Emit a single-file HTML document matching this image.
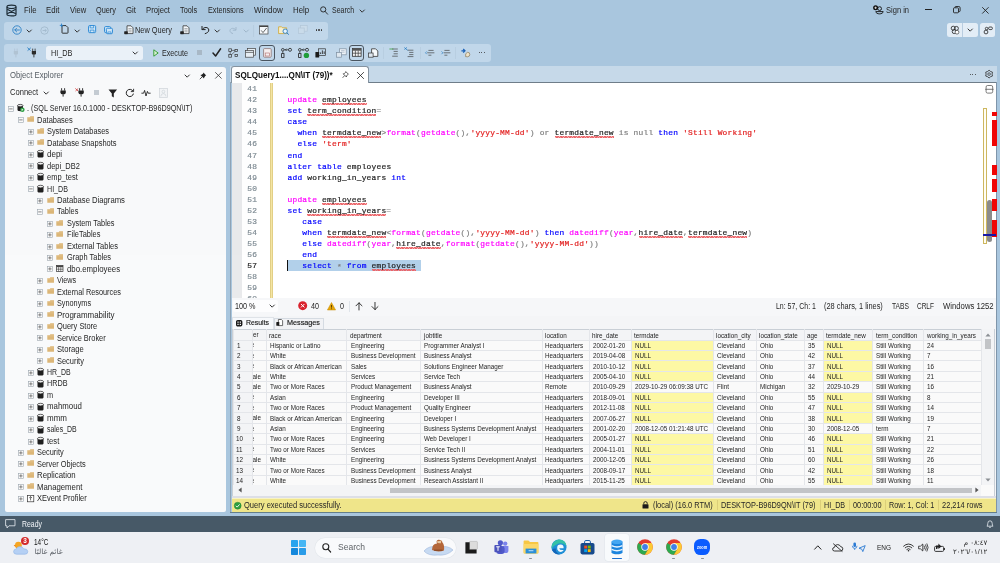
<!DOCTYPE html>
<html lang="en"><head><meta charset="utf-8"><title>SQLQuery1.sql - HI_DB - SQL Server Management Studio</title>
<style>
*{box-sizing:border-box;margin:0;padding:0}
html,body{width:1000px;height:563px;overflow:hidden}
body{position:relative;background:#a9c6de;font-family:"Liberation Sans",sans-serif;font-size:8.4px;color:#262626}
.a{position:absolute;white-space:nowrap}
.t{position:absolute;white-space:nowrap;line-height:12px;height:12px;transform-origin:0 50%}
.m{font-family:"Liberation Mono",monospace;font-size:7.9px;letter-spacing:0.207px;-webkit-text-stroke:0.2px}
.ln,.cl{position:absolute;white-space:pre;line-height:11px;height:11px}
.q{background-image:linear-gradient(45deg,transparent 34%,#ec6468 34%,#ec6468 66%,transparent 66%),linear-gradient(-45deg,transparent 34%,#ec6468 34%,#ec6468 66%,transparent 66%);background-size:2.6px 1.7px;background-position:0 9.1px,1.3px 9.1px;background-repeat:repeat-x}
.cl span{display:inline-block;height:11px;vertical-align:top}
.g{position:absolute;white-space:nowrap;font-size:6.6px;line-height:8.6px;height:8.6px;transform:scaleX(0.955);transform-origin:0 50%;color:#1e1e1e}
svg{position:absolute;overflow:visible}
#root{position:absolute;left:0;top:0;width:1000px;height:563px;will-change:transform;opacity:0.9999}
</style></head>
<body><div id="root">
<!-- menu bar -->
<svg style="left:6.00px;top:4.00px" width="11" height="13" viewBox="0 0 11 13"><path d="M1 2.6 C1 0.6 10 0.6 10 2.6 V10.4 C10 12.4 1 12.4 1 10.4 Z" fill="none" stroke="#1c2b36" stroke-width="1.2"/><path d="M1 3 C2 5 9 5 10 3 M1.2 9.8 L9.8 5.2 M1.2 5.2 L9.8 9.8" fill="none" stroke="#1c2b36" stroke-width="1.1"/></svg>
<div class="t" style="left:23.50px;top:4.11px;transform:scaleX(0.9235);">File</div>
<div class="t" style="left:46.00px;top:4.11px;transform:scaleX(0.9327);">Edit</div>
<div class="t" style="left:69.50px;top:4.11px;transform:scaleX(0.9063);">View</div>
<div class="t" style="left:96.00px;top:4.11px;transform:scaleX(0.8743);">Query</div>
<div class="t" style="left:125.80px;top:4.11px;transform:scaleX(0.9316);">Git</div>
<div class="t" style="left:146.00px;top:4.11px;transform:scaleX(0.9180);">Project</div>
<div class="t" style="left:180.00px;top:4.11px;transform:scaleX(0.8763);">Tools</div>
<div class="t" style="left:208.00px;top:4.11px;transform:scaleX(0.8688);">Extensions</div>
<div class="t" style="left:253.70px;top:4.11px;transform:scaleX(0.9640);">Window</div>
<div class="t" style="left:292.50px;top:4.11px;transform:scaleX(0.9377);">Help</div>
<svg style="left:320.00px;top:6.00px" width="8" height="9" viewBox="0 0 8 9"><circle cx="3.2" cy="3.4" r="2.6" fill="none" stroke="#222" stroke-width="0.9"/><path d="M5.1 5.4 L7.6 8.2" stroke="#222" stroke-width="0.9" stroke-linecap="round"/></svg>
<div class="t" style="left:332.00px;top:4.11px;transform:scaleX(0.8341);">Search</div>
<svg style="left:359.30px;top:9.00px" width="6.4" height="4.4" viewBox="0 0 6.4 4.4"><path d="M1 0.99 L3.20 3.19 L5.40 0.99" fill="none" stroke="#333" stroke-width="1.0" stroke-linecap="round" stroke-linejoin="round"/></svg>
<svg style="left:873.00px;top:4.60px" width="11" height="10" viewBox="0 0 11 10"><circle cx="2.6" cy="2.8" r="2.5" fill="#111"/><path d="M1.4 2.8H3.8M2.6 1.6V4" stroke="#fff" stroke-width="0.7"/><circle cx="6.6" cy="3.6" r="1.9" fill="none" stroke="#111" stroke-width="0.9"/><path d="M2.8 6.6 C3 9.6 10 9.6 10.2 6.6 Z" fill="none" stroke="#111" stroke-width="0.9"/></svg>
<div class="t" style="left:885.60px;top:4.11px;transform:scaleX(0.8994);">Sign in</div>
<div class="a" style="left:924.70px;top:9.20px;width:7.00px;height:0.90px;background:#222;"></div>
<svg style="left:953.00px;top:6.00px" width="8" height="8" viewBox="0 0 8 8"><rect x="0.5" y="1.8" width="5" height="5" rx="0.8" fill="none" stroke="#222" stroke-width="0.9"/><path d="M2 1.8 V1.3 Q2 0.5 2.8 0.5 H5.8 Q7.1 0.5 7.1 1.8 V4.8 Q7.1 5.6 6.3 5.6 H5.6" fill="none" stroke="#222" stroke-width="0.9"/></svg>
<svg style="left:982.00px;top:6.80px" width="7" height="7" viewBox="0 0 7 7"><path d="M0.5 0.5 L6.3 6.3 M6.3 0.5 L0.5 6.3" stroke="#222" stroke-width="0.9" stroke-linecap="round"/></svg>
<div class="a" style="left:947.00px;top:23.00px;width:31.00px;height:14.00px;background:#e3edf6;border-radius:2.5px;"></div>
<div class="a" style="left:962.20px;top:23.00px;width:0.80px;height:14.00px;background:#b9cde0;"></div>
<div class="a" style="left:980.00px;top:23.00px;width:14.80px;height:14.00px;background:#e3edf6;border-radius:2.5px;"></div>
<svg style="left:949.50px;top:25.00px" width="10" height="10" viewBox="0 0 10 10"><circle cx="3.2" cy="3.2" r="2" fill="none" stroke="#222" stroke-width="0.8"/><circle cx="6.4" cy="3.4" r="2" fill="none" stroke="#222" stroke-width="0.8"/><circle cx="4.2" cy="6.6" r="2" fill="none" stroke="#222" stroke-width="0.8"/><circle cx="7" cy="7.2" r="1.9" fill="#fff" stroke="#222" stroke-width="0.6"/></svg>
<svg style="left:967.10px;top:28.40px" width="6.4" height="4.4" viewBox="0 0 6.4 4.4"><path d="M1 0.99 L3.20 3.19 L5.40 0.99" fill="none" stroke="#333" stroke-width="1.0" stroke-linecap="round" stroke-linejoin="round"/></svg>
<svg style="left:982.50px;top:25.50px" width="10" height="9" viewBox="0 0 10 9"><circle cx="3" cy="6" r="1.9" fill="none" stroke="#222" stroke-width="0.8"/><circle cx="3.6" cy="2.6" r="1.3" fill="none" stroke="#222" stroke-width="0.8"/><rect x="5.6" y="1" width="3.8" height="2.6" rx="1.2" fill="none" stroke="#222" stroke-width="0.8"/></svg>
<!-- toolbar 1 -->
<div class="a" style="left:4.00px;top:21.50px;width:324.00px;height:18.00px;background:#c1d7ea;border-radius:3px;"></div>
<svg style="left:11.50px;top:25.00px" width="10" height="10" viewBox="0 0 10 10"><circle cx="5" cy="5" r="4.2" fill="none" stroke="#2b7fc4" stroke-width="0.9"/><path d="M7.4 5H2.8M4.6 3.2L2.8 5L4.6 6.8" fill="none" stroke="#2b7fc4" stroke-width="0.9" stroke-linecap="round" stroke-linejoin="round"/></svg>
<svg style="left:26.30px;top:28.80px" width="6.4" height="4.4" viewBox="0 0 6.4 4.4"><path d="M1 0.99 L3.20 3.19 L5.40 0.99" fill="none" stroke="#333" stroke-width="1.0" stroke-linecap="round" stroke-linejoin="round"/></svg>
<svg style="left:39.80px;top:25.70px" width="9" height="9" viewBox="0 0 9 9"><circle cx="4.5" cy="4.5" r="3.7" fill="none" stroke="#9fb6c9" stroke-width="0.8"/><path d="M2.6 4.5H6.2M4.9 3.1L6.3 4.5L4.9 5.9" fill="none" stroke="#9fb6c9" stroke-width="0.8"/></svg>
<svg style="left:58.50px;top:23.30px" width="10" height="11" viewBox="0 0 10 11"><path d="M3 2.6 H7 L9 4.6 V9.6 Q9 10.2 8.4 10.2 H3.6 Q3 10.2 3 9.6 Z" fill="none" stroke="#222" stroke-width="0.9"/><path d="M0.8 2.4 H4.2 M2.5 0.6 V4.2" stroke="#2b7fc4" stroke-width="0.9"/></svg>
<svg style="left:74.30px;top:28.80px" width="6.4" height="4.4" viewBox="0 0 6.4 4.4"><path d="M1 0.99 L3.20 3.19 L5.40 0.99" fill="none" stroke="#333" stroke-width="1.0" stroke-linecap="round" stroke-linejoin="round"/></svg>
<svg style="left:88.00px;top:25.40px" width="8.2" height="8.2" viewBox="0 0 9 9"><rect x="0.6" y="0.6" width="7.8" height="7.8" rx="1.2" fill="#cfe6f8" stroke="#2384d3" stroke-width="1"/><path d="M2.4 0.8V3.2H6.2V0.8M2.4 8.2V5.6H6.6V8.2" fill="none" stroke="#2384d3" stroke-width="0.8"/></svg>
<svg style="left:104.40px;top:25.50px" width="9.2" height="8.3" viewBox="0 0 10 9"><rect x="0.6" y="0.6" width="6.6" height="6.6" rx="1.2" fill="#cfe6f8" stroke="#2384d3" stroke-width="1"/><rect x="2.6" y="2.4" width="6.6" height="6" rx="1.2" fill="#cfe6f8" stroke="#2384d3" stroke-width="1"/><path d="M4.2 8.2V6.4H7.6V8.2" fill="none" stroke="#2384d3" stroke-width="0.7"/></svg>
<svg style="left:123.60px;top:25.40px" width="10" height="10" viewBox="0 0 10 10"><path d="M3 0.8 H7 L9 2.8 V8.6 H3 Z" fill="#f4f8fb" stroke="#333" stroke-width="0.8"/><path d="M4.4 3.6H7.6M4.4 5.2H7.6M4.4 6.8H7.6" stroke="#777" stroke-width="0.6"/><rect x="0.2" y="6.2" width="3.6" height="3" rx="0.6" fill="#222"/></svg>
<div class="t" style="left:135.00px;top:24.11px;transform:scaleX(0.8807);">New Query</div>
<svg style="left:180.00px;top:25.40px" width="10" height="10" viewBox="0 0 10 10"><path d="M3 0.8 H7 L9 2.8 V8.6 H3 Z" fill="#f4f8fb" stroke="#333" stroke-width="0.8"/><path d="M4.4 3.6H7.6M4.4 5.2H7.6M4.4 6.8H7.6" stroke="#777" stroke-width="0.6"/><rect x="0.2" y="6.2" width="3.6" height="3" rx="0.6" fill="#222"/></svg>
<svg style="left:200.50px;top:25.00px" width="9" height="9" viewBox="0 0 9 9"><path d="M1 1 V4.6 H4.6" fill="none" stroke="#222" stroke-width="1"/><path d="M1.2 4.4 C3 1.6 7.6 1.8 7.8 5 C7.9 7 6 8 4.2 8.6" fill="none" stroke="#222" stroke-width="1" stroke-linecap="round"/></svg>
<svg style="left:214.30px;top:28.80px" width="6.4" height="4.4" viewBox="0 0 6.4 4.4"><path d="M1 0.99 L3.20 3.19 L5.40 0.99" fill="none" stroke="#333" stroke-width="1.0" stroke-linecap="round" stroke-linejoin="round"/></svg>
<svg style="left:229.00px;top:25.50px" width="8" height="8" viewBox="0 0 8 8"><path d="M7 1 V4.2 H3.8" fill="none" stroke="#9fb6c9" stroke-width="0.9"/><path d="M6.8 4 C5.2 1.6 1.2 1.8 1 4.6 C1 6.4 2.6 7.2 4 7.6" fill="none" stroke="#9fb6c9" stroke-width="0.9"/></svg>
<svg style="left:243.30px;top:28.80px" width="6.4" height="4.4" viewBox="0 0 6.4 4.4"><path d="M1 0.99 L3.20 3.19 L5.40 0.99" fill="none" stroke="#9fb6c9" stroke-width="1.0" stroke-linecap="round" stroke-linejoin="round"/></svg>
<div class="a" style="left:253.20px;top:24.50px;width:0.70px;height:12.00px;background:#b8cee1;"></div>
<svg style="left:259.00px;top:24.90px" width="10" height="10" viewBox="0 0 10 10"><rect x="0.6" y="0.8" width="8.4" height="8.2" fill="#f6f9fc" stroke="#444" stroke-width="0.7"/><path d="M0.6 1.4H9" stroke="#333" stroke-width="1"/><path d="M2.2 5.4L4 7.6L7.6 3" fill="none" stroke="#444" stroke-width="0.8"/></svg>
<svg style="left:277.50px;top:24.70px" width="12" height="10" viewBox="0 0 12 10"><path d="M0.6 1.8 H3.6 L4.6 2.8 H8.6 V8.6 H0.6 Z" fill="#f6efcf" stroke="#d0a62e" stroke-width="0.8"/><circle cx="7.2" cy="6.2" r="2.2" fill="#e9f4fd" stroke="#2b7fc4" stroke-width="0.9"/><path d="M8.8 7.8L10.8 9.6" stroke="#2b7fc4" stroke-width="1"/></svg>
<svg style="left:297.50px;top:25.10px" width="10" height="9" viewBox="0 0 10 9"><rect x="2.6" y="0.6" width="6.6" height="5.6" fill="#cbdcea" stroke="#b3c6d7" stroke-width="0.7"/><rect x="0.6" y="3" width="5.6" height="5.4" fill="#c9dbea" stroke="#b3c6d7" stroke-width="0.7"/></svg>
<div class="a" style="left:315.80px;top:29.40px;width:1.30px;height:1.30px;background:#333;border-radius:1px;"></div>
<div class="a" style="left:318.40px;top:29.40px;width:1.30px;height:1.30px;background:#333;border-radius:1px;"></div>
<div class="a" style="left:321.00px;top:29.40px;width:1.30px;height:1.30px;background:#333;border-radius:1px;"></div>
<!-- toolbar 2 -->
<div class="a" style="left:4.00px;top:43.50px;width:486.50px;height:18.30px;background:#c1d7ea;border-radius:3px;"></div>
<svg style="left:13.20px;top:47.80px" width="6" height="10" viewBox="0 0 6 10"><path d="M1.7 0.6V3M4.1 0.6V3" stroke="#b1c3d3" stroke-width="0.8"/><path d="M0.8 3H5V5.2Q5 6.8 2.9 6.8Q0.8 6.8 0.8 5.2Z" fill="#b1c3d3"/><path d="M2.9 6.8V9.4" stroke="#b1c3d3" stroke-width="0.9"/></svg>
<svg style="left:31.40px;top:48.00px" width="6" height="10" viewBox="0 0 6 10"><path d="M1.7 0.6V3M4.1 0.6V3" stroke="#2a2a2a" stroke-width="0.8"/><path d="M0.8 3H5V5.2Q5 6.8 2.9 6.8Q0.8 6.8 0.8 5.2Z" fill="#2a2a2a"/><path d="M2.9 6.8V9.4" stroke="#2a2a2a" stroke-width="0.9"/></svg>
<svg style="left:27.40px;top:47.00px" width="5" height="5" viewBox="0 0 5 5"><path d="M0.4 0.6L3.6 3.6M3.8 0.8L0.6 3.6" stroke="#2b7fc4" stroke-width="0.9"/></svg>
<div class="a" style="left:45.50px;top:45.50px;width:97.50px;height:14.50px;background:#ebf2f9;border-radius:2.5px;"></div>
<div class="t" style="left:51.00px;top:46.51px;transform:scaleX(0.8690);">HI_DB</div>
<svg style="left:132.10px;top:51.20px" width="6.4" height="4.4" viewBox="0 0 6.4 4.4"><path d="M1 0.99 L3.20 3.19 L5.40 0.99" fill="none" stroke="#333" stroke-width="1.0" stroke-linecap="round" stroke-linejoin="round"/></svg>
<svg style="left:152.50px;top:48.80px" width="6" height="8" viewBox="0 0 6 8"><path d="M0.8 0.8L5.2 4L0.8 7.2Z" fill="#d9f0d2" stroke="#2d9a2d" stroke-width="0.9" stroke-linejoin="round"/></svg>
<div class="t" style="left:162.00px;top:46.51px;transform:scaleX(0.8566);">Execute</div>
<div class="a" style="left:197.30px;top:50.20px;width:5.20px;height:5.20px;background:#a8b8c6;"></div>
<svg style="left:211.50px;top:48.20px" width="10" height="9" viewBox="0 0 10 9"><path d="M1 5L3.6 8L8.6 0.8" fill="none" stroke="#222" stroke-width="1.5" stroke-linecap="round" stroke-linejoin="round"/></svg>
<svg style="left:228.00px;top:47.80px" width="11" height="10" viewBox="0 0 11 10"><rect x="0.8" y="0.8" width="2.6" height="2.6" fill="none" stroke="#333" stroke-width="0.7"/><rect x="0.8" y="6.6" width="2.6" height="2.6" fill="none" stroke="#333" stroke-width="0.7"/><rect x="7" y="1.4" width="2.6" height="2.2" fill="none" stroke="#333" stroke-width="0.7"/><rect x="7" y="6.4" width="2.6" height="2.2" fill="none" stroke="#333" stroke-width="0.7"/><path d="M3.4 2.4H7M2.2 3.4V6.6M3.6 6.6L7 3.4" stroke="#333" stroke-width="0.6" fill="none"/></svg>
<svg style="left:244.50px;top:48.00px" width="11" height="10" viewBox="0 0 11 10"><rect x="2.4" y="0.6" width="8" height="6.6" fill="#e8eff5" stroke="#444" stroke-width="0.7"/><rect x="0.6" y="2.6" width="8" height="6.6" fill="#e8eff5" stroke="#444" stroke-width="0.7"/><path d="M0.6 4.4H8.6" stroke="#444" stroke-width="0.7"/></svg>
<div class="a" style="left:258.80px;top:45.00px;width:16.20px;height:16.00px;border:0.9px solid #4a5560;border-radius:3px;"></div>
<svg style="left:262.60px;top:48.00px" width="9" height="10" viewBox="0 0 9 10"><rect x="0.6" y="0.6" width="7.6" height="8.6" rx="0.8" fill="#f6efef" stroke="#8a7272" stroke-width="0.8"/><rect x="2.2" y="5" width="4.4" height="3" fill="none" stroke="#b06a6a" stroke-width="0.6"/></svg>
<svg style="left:280.60px;top:47.80px" width="12" height="10" viewBox="0 0 12 10"><circle cx="1.8" cy="1.8" r="1.3" fill="none" stroke="#222" stroke-width="0.8"/><circle cx="9" cy="1.8" r="1.5" fill="none" stroke="#222" stroke-width="0.8"/><path d="M3.2 1.8H7.4M5.6 0.6L4.4 1.8L5.6 3M1.8 3.2V5.4" stroke="#222" stroke-width="0.7" fill="none"/><rect x="0.6" y="5.6" width="2.4" height="3.8" fill="none" stroke="#222" stroke-width="0.8"/></svg>
<svg style="left:297.60px;top:47.80px" width="12" height="10" viewBox="0 0 12 10"><circle cx="1.8" cy="1.8" r="1.3" fill="none" stroke="#222" stroke-width="0.8"/><circle cx="9" cy="1.8" r="1.5" fill="none" stroke="#222" stroke-width="0.8"/><path d="M3.2 1.8H7.4M5.6 0.6L4.4 1.8L5.6 3M1.8 3.2V5.4" stroke="#222" stroke-width="0.7" fill="none"/><rect x="0.6" y="5.6" width="2.4" height="3.8" fill="none" stroke="#222" stroke-width="0.8"/><circle cx="8.4" cy="7.4" r="2.7" fill="#1f9d3a"/></svg>
<svg style="left:314.60px;top:48.00px" width="11" height="10" viewBox="0 0 11 10"><rect x="3.4" y="0.8" width="7" height="6.6" fill="none" stroke="#333" stroke-width="0.7"/><path d="M5.6 6V4.4M7.4 6V2.4M9.2 6V3.4" stroke="#333" stroke-width="0.9"/><rect x="0.4" y="4" width="3.8" height="5.6" rx="0.6" fill="#1b1b1b"/></svg>
<svg style="left:335.50px;top:48.00px" width="11" height="10" viewBox="0 0 11 10"><rect x="3.6" y="0.8" width="6.6" height="6" fill="#eef3f8" stroke="#7e8fa0" stroke-width="0.7"/><rect x="0.6" y="4.4" width="5" height="4.8" fill="#dfe8f0" stroke="#7e8fa0" stroke-width="0.7"/><path d="M5 2.6H8.6M5 4.2H8.6" stroke="#9aaaba" stroke-width="0.6"/></svg>
<div class="a" style="left:348.50px;top:45.00px;width:15.50px;height:15.60px;border:0.9px solid #4a5560;border-radius:3px;"></div>
<svg style="left:351.60px;top:48.20px" width="10" height="9" viewBox="0 0 10 9"><rect x="0.5" y="0.5" width="8.6" height="7.8" fill="#f3f3f3" stroke="#333" stroke-width="0.8"/><rect x="0.5" y="0.5" width="8.6" height="2.2" fill="#555"/><path d="M0.5 5.2H9.1M3.4 2.6V8.3M6.2 2.6V8.3" stroke="#333" stroke-width="0.7"/></svg>
<svg style="left:368.00px;top:47.80px" width="11" height="10" viewBox="0 0 11 10"><path d="M3.6 0.8H7.6L9.8 3V8.4H3.6Z" fill="#f7fafc" stroke="#333" stroke-width="0.8"/><rect x="0.5" y="5" width="4.6" height="4.2" fill="#dfe8f0" stroke="#333" stroke-width="0.7"/></svg>
<div class="a" style="left:383.40px;top:46.50px;width:0.70px;height:12.00px;background:#b8cee1;"></div>
<svg style="left:388.60px;top:48.00px" width="10" height="9" viewBox="0 0 10 9"><path d="M3.2 1H8.8M4.6 3.4H8.8M4.6 5.8H8.8M3.2 8.2H8.8" stroke="#3a3a3a" stroke-width="0.65"/><path d="M0.4 1H4.4" stroke="#2d9a2d" stroke-width="0.7"/></svg>
<svg style="left:404.00px;top:47.20px" width="10" height="10" viewBox="0 0 10 10"><path d="M3.6 3.2H9.4M5.2 5.4H9.4M5.2 7.6H9.4M3.6 9.6H9.4" stroke="#3a3a3a" stroke-width="0.65"/><path d="M0.4 0.6L3.6 3.2M2.6 0.4L0.6 2.6" stroke="#2b7fc4" stroke-width="0.9"/></svg>
<div class="a" style="left:419.60px;top:46.50px;width:0.70px;height:12.00px;background:#b8cee1;"></div>
<svg style="left:424.60px;top:49.00px" width="10" height="8" viewBox="0 0 10 8"><path d="M3.4 1.4H8.6M2.2 3.8H9.4M3.4 6.2H6.4" stroke="#3a3a3a" stroke-width="0.65"/><path d="M1.8 2.4L0.5 3.8L1.8 5.2" stroke="#2b7fc4" stroke-width="0.7" fill="none"/></svg>
<svg style="left:440.60px;top:49.00px" width="10" height="8" viewBox="0 0 10 8"><path d="M3.4 1.4H8.6M2.6 3.8H9.4M3.4 6.2H6.4" stroke="#3a3a3a" stroke-width="0.65"/><path d="M0.5 2.4L1.8 3.8L0.5 5.2" stroke="#2b7fc4" stroke-width="0.7" fill="none"/></svg>
<div class="a" style="left:455.40px;top:46.50px;width:0.70px;height:12.00px;background:#b8cee1;"></div>
<svg style="left:460.60px;top:47.80px" width="10" height="10" viewBox="0 0 10 10"><path d="M0.4 2.8H3.4M2.2 1L4 2.8L2.2 4.6" stroke="#1b62b8" stroke-width="1.2" fill="none"/><path d="M4.6 8.6Q4 5 6.4 4.4Q8.8 4 8.8 6.4Q8.8 8.6 6.6 8.8Z" fill="#efe3c8" stroke="#8c7a58" stroke-width="0.7"/></svg>
<div class="a" style="left:478.60px;top:52.10px;width:1.30px;height:1.30px;background:#333;border-radius:1px;"></div>
<div class="a" style="left:481.20px;top:52.10px;width:1.30px;height:1.30px;background:#333;border-radius:1px;"></div>
<div class="a" style="left:483.80px;top:52.10px;width:1.30px;height:1.30px;background:#333;border-radius:1px;"></div>
<!-- object explorer -->
<div class="a" style="left:5.00px;top:67.00px;width:220.70px;height:444.60px;background:#f9fafb;border-radius:3px 3px 2px 2px;"></div>
<div class="t" style="left:9.70px;top:68.81px;color:#555c63;transform:scaleX(0.9242);">Object Explorer</div>
<svg style="left:184.40px;top:73.60px" width="6.4" height="4.4" viewBox="0 0 6.4 4.4"><path d="M1 0.99 L3.20 3.19 L5.40 0.99" fill="none" stroke="#333" stroke-width="1.0" stroke-linecap="round" stroke-linejoin="round"/></svg>
<svg style="left:199.00px;top:71.50px" width="8" height="8" viewBox="0 0 8 8"><path d="M4.4 0.6L7.2 3.4L6.4 3.8L5.2 5.4L5 6.6L1.4 3L2.6 2.8L4.2 1.6Z" fill="#222"/><path d="M3 5L0.8 7.2" stroke="#222" stroke-width="0.8"/></svg>
<svg style="left:215.20px;top:72.00px" width="7" height="7" viewBox="0 0 7 7"><path d="M0.5 0.5L6.3 6.3M6.3 0.5L0.5 6.3" stroke="#333" stroke-width="0.8" stroke-linecap="round"/></svg>
<div class="t" style="left:9.70px;top:86.31px;transform:scaleX(0.9045);">Connect</div>
<svg style="left:43.40px;top:91.20px" width="6.4" height="4.4" viewBox="0 0 6.4 4.4"><path d="M1 0.99 L3.20 3.19 L5.40 0.99" fill="none" stroke="#333" stroke-width="1.0" stroke-linecap="round" stroke-linejoin="round"/></svg>
<svg style="left:59.80px;top:88.40px" width="7" height="9" viewBox="0 0 7 9"><path d="M1.6 0.2V2.6M4.6 0.2V2.6" stroke="#222" stroke-width="0.9"/><path d="M0.4 2.6H5.8V4.8Q5.8 6.4 3.1 6.4Q0.4 6.4 0.4 4.8Z" fill="#222"/><path d="M3.1 6.4V8.6" stroke="#222" stroke-width="1"/></svg>
<svg style="left:78.20px;top:88.40px" width="7" height="9" viewBox="0 0 7 9"><path d="M1.6 0.2V2.6M4.6 0.2V2.6" stroke="#222" stroke-width="0.9"/><path d="M0.4 2.6H5.8V4.8Q5.8 6.4 3.1 6.4Q0.4 6.4 0.4 4.8Z" fill="#222"/><path d="M3.1 6.4V8.6" stroke="#222" stroke-width="1"/></svg>
<svg style="left:74.60px;top:87.60px" width="4" height="4" viewBox="0 0 4 4"><path d="M0.3 0.4L3 3M3.2 0.5L0.5 3" stroke="#d23b3b" stroke-width="0.8"/></svg>
<div class="a" style="left:94.00px;top:90.20px;width:5.00px;height:5.00px;background:#c5ccd2;"></div>
<svg style="left:108.00px;top:88.60px" width="10" height="9" viewBox="0 0 10 9"><path d="M0.5 0.6H9.1L5.8 4.4V8.4L3.8 7.2V4.4Z" fill="#222"/></svg>
<svg style="left:125.00px;top:88.00px" width="10" height="10" viewBox="0 0 10 10"><path d="M8 3.2A3.6 3.6 0 1 0 8.4 5.6" fill="none" stroke="#222" stroke-width="1"/><path d="M8.6 0.8V3.6H5.8" fill="none" stroke="#222" stroke-width="0.9"/></svg>
<svg style="left:141.40px;top:89.00px" width="10" height="8" viewBox="0 0 10 8"><path d="M0.4 4.2H2.6L3.6 1.4L5 7L6.4 2.4L7.2 4.2H9.6" fill="none" stroke="#222" stroke-width="0.9" stroke-linejoin="round"/></svg>
<svg style="left:158.60px;top:88.00px" width="9" height="10" viewBox="0 0 9 10"><rect x="0.4" y="0.4" width="8" height="9" fill="#f3f5f7" stroke="#cfd5da" stroke-width="0.7"/><circle cx="4.4" cy="3.6" r="1.4" fill="none" stroke="#cfd5da" stroke-width="0.7"/><path d="M1.8 8.4Q2 5.6 4.4 5.6Q6.8 5.6 7 8.4" fill="none" stroke="#cfd5da" stroke-width="0.7"/></svg>
<svg style="left:7.80px;top:105.90px" width="5.8" height="5.8" viewBox="0 0 5.8 5.8"><rect x="0.4" y="0.4" width="5" height="5" fill="#fbfbfb" stroke="#9aa4ad" stroke-width="0.6"/><path d="M1.2 2.9H4.6" stroke="#555" stroke-width="0.7"/></svg>
<svg style="left:17.00px;top:103.70px" width="8" height="8.4" viewBox="0 0 8 8.4"><path d="M0.5 1.6V6C0.5 7.6 6 7.6 6 6V1.6Z" fill="#1f1f1f"/><ellipse cx="3.25" cy="1.6" rx="2.75" ry="1.2" fill="#e9e9e9" stroke="#1f1f1f" stroke-width="0.7"/><circle cx="5.4" cy="5.8" r="2.2" fill="#2ea043"/><path d="M4.7 4.7L6.3 5.8L4.7 6.9Z" fill="#fff"/></svg>
<div class="t" style="left:27.30px;top:102.21px;transform:scaleX(0.8646);">. (SQL Server 16.0.1000 - DESKTOP-B96D9QN\IT)</div>
<svg style="left:17.65px;top:117.37px" width="5.8" height="5.8" viewBox="0 0 5.8 5.8"><rect x="0.4" y="0.4" width="5" height="5" fill="#fbfbfb" stroke="#9aa4ad" stroke-width="0.6"/><path d="M1.2 2.9H4.6" stroke="#555" stroke-width="0.7"/></svg>
<svg style="left:26.85px;top:116.37px" width="7.4" height="6" viewBox="0 0 7.4 6"><path d="M0.3 1.2H2.6L3.4 0.3H7V5.7H0.3Z" fill="#dcb677"/><path d="M0.3 1.9H7" stroke="#e9cd9b" stroke-width="0.5"/></svg>
<div class="t" style="left:37.15px;top:113.68px;transform:scaleX(0.8927);">Databases</div>
<svg style="left:27.50px;top:128.84px" width="5.8" height="5.8" viewBox="0 0 5.8 5.8"><rect x="0.4" y="0.4" width="5" height="5" fill="#fbfbfb" stroke="#9aa4ad" stroke-width="0.6"/><path d="M1.2 2.9H4.6" stroke="#555" stroke-width="0.7"/><path d="M2.9 1.2V4.6" stroke="#555" stroke-width="0.7"/></svg>
<svg style="left:36.70px;top:127.84px" width="7.4" height="6" viewBox="0 0 7.4 6"><path d="M0.3 1.2H2.6L3.4 0.3H7V5.7H0.3Z" fill="#dcb677"/><path d="M0.3 1.9H7" stroke="#e9cd9b" stroke-width="0.5"/></svg>
<div class="t" style="left:47.00px;top:125.15px;transform:scaleX(0.8823);">System Databases</div>
<svg style="left:27.50px;top:140.31px" width="5.8" height="5.8" viewBox="0 0 5.8 5.8"><rect x="0.4" y="0.4" width="5" height="5" fill="#fbfbfb" stroke="#9aa4ad" stroke-width="0.6"/><path d="M1.2 2.9H4.6" stroke="#555" stroke-width="0.7"/><path d="M2.9 1.2V4.6" stroke="#555" stroke-width="0.7"/></svg>
<svg style="left:36.70px;top:139.31px" width="7.4" height="6" viewBox="0 0 7.4 6"><path d="M0.3 1.2H2.6L3.4 0.3H7V5.7H0.3Z" fill="#dcb677"/><path d="M0.3 1.9H7" stroke="#e9cd9b" stroke-width="0.5"/></svg>
<div class="t" style="left:47.00px;top:136.62px;transform:scaleX(0.8950);">Database Snapshots</div>
<svg style="left:27.50px;top:151.78px" width="5.8" height="5.8" viewBox="0 0 5.8 5.8"><rect x="0.4" y="0.4" width="5" height="5" fill="#fbfbfb" stroke="#9aa4ad" stroke-width="0.6"/><path d="M1.2 2.9H4.6" stroke="#555" stroke-width="0.7"/><path d="M2.9 1.2V4.6" stroke="#555" stroke-width="0.7"/></svg>
<svg style="left:36.90px;top:150.38px" width="7" height="8" viewBox="0 0 7 8"><path d="M0.5 1.6V6.4C0.5 8 6.5 8 6.5 6.4V1.6Z" fill="#1f1f1f"/><ellipse cx="3.5" cy="1.6" rx="3" ry="1.3" fill="#f2f2f2" stroke="#1f1f1f" stroke-width="0.7"/></svg>
<div class="t" style="left:47.00px;top:148.09px;transform:scaleX(0.9571);">depi</div>
<svg style="left:27.50px;top:163.25px" width="5.8" height="5.8" viewBox="0 0 5.8 5.8"><rect x="0.4" y="0.4" width="5" height="5" fill="#fbfbfb" stroke="#9aa4ad" stroke-width="0.6"/><path d="M1.2 2.9H4.6" stroke="#555" stroke-width="0.7"/><path d="M2.9 1.2V4.6" stroke="#555" stroke-width="0.7"/></svg>
<svg style="left:36.90px;top:161.85px" width="7" height="8" viewBox="0 0 7 8"><path d="M0.5 1.6V6.4C0.5 8 6.5 8 6.5 6.4V1.6Z" fill="#1f1f1f"/><ellipse cx="3.5" cy="1.6" rx="3" ry="1.3" fill="#f2f2f2" stroke="#1f1f1f" stroke-width="0.7"/></svg>
<div class="t" style="left:47.00px;top:159.56px;transform:scaleX(0.8918);">depi_DB2</div>
<svg style="left:27.50px;top:174.72px" width="5.8" height="5.8" viewBox="0 0 5.8 5.8"><rect x="0.4" y="0.4" width="5" height="5" fill="#fbfbfb" stroke="#9aa4ad" stroke-width="0.6"/><path d="M1.2 2.9H4.6" stroke="#555" stroke-width="0.7"/><path d="M2.9 1.2V4.6" stroke="#555" stroke-width="0.7"/></svg>
<svg style="left:36.90px;top:173.32px" width="7" height="8" viewBox="0 0 7 8"><path d="M0.5 1.6V6.4C0.5 8 6.5 8 6.5 6.4V1.6Z" fill="#1f1f1f"/><ellipse cx="3.5" cy="1.6" rx="3" ry="1.3" fill="#f2f2f2" stroke="#1f1f1f" stroke-width="0.7"/></svg>
<div class="t" style="left:47.00px;top:171.03px;transform:scaleX(0.8943);">emp_test</div>
<svg style="left:27.50px;top:186.19px" width="5.8" height="5.8" viewBox="0 0 5.8 5.8"><rect x="0.4" y="0.4" width="5" height="5" fill="#fbfbfb" stroke="#9aa4ad" stroke-width="0.6"/><path d="M1.2 2.9H4.6" stroke="#555" stroke-width="0.7"/></svg>
<svg style="left:36.90px;top:184.79px" width="7" height="8" viewBox="0 0 7 8"><path d="M0.5 1.6V6.4C0.5 8 6.5 8 6.5 6.4V1.6Z" fill="#1f1f1f"/><ellipse cx="3.5" cy="1.6" rx="3" ry="1.3" fill="#f2f2f2" stroke="#1f1f1f" stroke-width="0.7"/></svg>
<div class="t" style="left:47.00px;top:182.50px;transform:scaleX(0.8488);">HI_DB</div>
<svg style="left:37.35px;top:197.66px" width="5.8" height="5.8" viewBox="0 0 5.8 5.8"><rect x="0.4" y="0.4" width="5" height="5" fill="#fbfbfb" stroke="#9aa4ad" stroke-width="0.6"/><path d="M1.2 2.9H4.6" stroke="#555" stroke-width="0.7"/><path d="M2.9 1.2V4.6" stroke="#555" stroke-width="0.7"/></svg>
<svg style="left:46.55px;top:196.66px" width="7.4" height="6" viewBox="0 0 7.4 6"><path d="M0.3 1.2H2.6L3.4 0.3H7V5.7H0.3Z" fill="#dcb677"/><path d="M0.3 1.9H7" stroke="#e9cd9b" stroke-width="0.5"/></svg>
<div class="t" style="left:56.85px;top:193.97px;transform:scaleX(0.9180);">Database Diagrams</div>
<svg style="left:37.35px;top:209.13px" width="5.8" height="5.8" viewBox="0 0 5.8 5.8"><rect x="0.4" y="0.4" width="5" height="5" fill="#fbfbfb" stroke="#9aa4ad" stroke-width="0.6"/><path d="M1.2 2.9H4.6" stroke="#555" stroke-width="0.7"/></svg>
<svg style="left:46.55px;top:208.13px" width="7.4" height="6" viewBox="0 0 7.4 6"><path d="M0.3 1.2H2.6L3.4 0.3H7V5.7H0.3Z" fill="#dcb677"/><path d="M0.3 1.9H7" stroke="#e9cd9b" stroke-width="0.5"/></svg>
<div class="t" style="left:56.85px;top:205.44px;transform:scaleX(0.8825);">Tables</div>
<svg style="left:47.20px;top:220.60px" width="5.8" height="5.8" viewBox="0 0 5.8 5.8"><rect x="0.4" y="0.4" width="5" height="5" fill="#fbfbfb" stroke="#9aa4ad" stroke-width="0.6"/><path d="M1.2 2.9H4.6" stroke="#555" stroke-width="0.7"/><path d="M2.9 1.2V4.6" stroke="#555" stroke-width="0.7"/></svg>
<svg style="left:56.40px;top:219.60px" width="7.4" height="6" viewBox="0 0 7.4 6"><path d="M0.3 1.2H2.6L3.4 0.3H7V5.7H0.3Z" fill="#dcb677"/><path d="M0.3 1.9H7" stroke="#e9cd9b" stroke-width="0.5"/></svg>
<div class="t" style="left:66.70px;top:216.91px;transform:scaleX(0.8749);">System Tables</div>
<svg style="left:47.20px;top:232.07px" width="5.8" height="5.8" viewBox="0 0 5.8 5.8"><rect x="0.4" y="0.4" width="5" height="5" fill="#fbfbfb" stroke="#9aa4ad" stroke-width="0.6"/><path d="M1.2 2.9H4.6" stroke="#555" stroke-width="0.7"/><path d="M2.9 1.2V4.6" stroke="#555" stroke-width="0.7"/></svg>
<svg style="left:56.40px;top:231.07px" width="7.4" height="6" viewBox="0 0 7.4 6"><path d="M0.3 1.2H2.6L3.4 0.3H7V5.7H0.3Z" fill="#dcb677"/><path d="M0.3 1.9H7" stroke="#e9cd9b" stroke-width="0.5"/></svg>
<div class="t" style="left:66.70px;top:228.38px;transform:scaleX(0.8852);">FileTables</div>
<svg style="left:47.20px;top:243.54px" width="5.8" height="5.8" viewBox="0 0 5.8 5.8"><rect x="0.4" y="0.4" width="5" height="5" fill="#fbfbfb" stroke="#9aa4ad" stroke-width="0.6"/><path d="M1.2 2.9H4.6" stroke="#555" stroke-width="0.7"/><path d="M2.9 1.2V4.6" stroke="#555" stroke-width="0.7"/></svg>
<svg style="left:56.40px;top:242.54px" width="7.4" height="6" viewBox="0 0 7.4 6"><path d="M0.3 1.2H2.6L3.4 0.3H7V5.7H0.3Z" fill="#dcb677"/><path d="M0.3 1.9H7" stroke="#e9cd9b" stroke-width="0.5"/></svg>
<div class="t" style="left:66.70px;top:239.85px;transform:scaleX(0.8927);">External Tables</div>
<svg style="left:47.20px;top:255.01px" width="5.8" height="5.8" viewBox="0 0 5.8 5.8"><rect x="0.4" y="0.4" width="5" height="5" fill="#fbfbfb" stroke="#9aa4ad" stroke-width="0.6"/><path d="M1.2 2.9H4.6" stroke="#555" stroke-width="0.7"/><path d="M2.9 1.2V4.6" stroke="#555" stroke-width="0.7"/></svg>
<svg style="left:56.40px;top:254.01px" width="7.4" height="6" viewBox="0 0 7.4 6"><path d="M0.3 1.2H2.6L3.4 0.3H7V5.7H0.3Z" fill="#dcb677"/><path d="M0.3 1.9H7" stroke="#e9cd9b" stroke-width="0.5"/></svg>
<div class="t" style="left:66.70px;top:251.32px;transform:scaleX(0.8862);">Graph Tables</div>
<svg style="left:47.20px;top:266.48px" width="5.8" height="5.8" viewBox="0 0 5.8 5.8"><rect x="0.4" y="0.4" width="5" height="5" fill="#fbfbfb" stroke="#9aa4ad" stroke-width="0.6"/><path d="M1.2 2.9H4.6" stroke="#555" stroke-width="0.7"/><path d="M2.9 1.2V4.6" stroke="#555" stroke-width="0.7"/></svg>
<svg style="left:56.40px;top:265.48px" width="7.4" height="7" viewBox="0 0 7.4 7"><rect x="0.4" y="0.4" width="6.6" height="6" fill="#fff" stroke="#333" stroke-width="0.7"/><rect x="0.4" y="0.4" width="6.6" height="1.8" fill="#444"/><path d="M0.4 4.2H7M2.6 2.2V6.4M4.8 2.2V6.4" stroke="#333" stroke-width="0.6"/></svg>
<div class="t" style="left:66.70px;top:262.79px;transform:scaleX(0.9338);">dbo.employees</div>
<svg style="left:37.35px;top:277.95px" width="5.8" height="5.8" viewBox="0 0 5.8 5.8"><rect x="0.4" y="0.4" width="5" height="5" fill="#fbfbfb" stroke="#9aa4ad" stroke-width="0.6"/><path d="M1.2 2.9H4.6" stroke="#555" stroke-width="0.7"/><path d="M2.9 1.2V4.6" stroke="#555" stroke-width="0.7"/></svg>
<svg style="left:46.55px;top:276.95px" width="7.4" height="6" viewBox="0 0 7.4 6"><path d="M0.3 1.2H2.6L3.4 0.3H7V5.7H0.3Z" fill="#dcb677"/><path d="M0.3 1.9H7" stroke="#e9cd9b" stroke-width="0.5"/></svg>
<div class="t" style="left:56.85px;top:274.26px;transform:scaleX(0.8636);">Views</div>
<svg style="left:37.35px;top:289.42px" width="5.8" height="5.8" viewBox="0 0 5.8 5.8"><rect x="0.4" y="0.4" width="5" height="5" fill="#fbfbfb" stroke="#9aa4ad" stroke-width="0.6"/><path d="M1.2 2.9H4.6" stroke="#555" stroke-width="0.7"/><path d="M2.9 1.2V4.6" stroke="#555" stroke-width="0.7"/></svg>
<svg style="left:46.55px;top:288.42px" width="7.4" height="6" viewBox="0 0 7.4 6"><path d="M0.3 1.2H2.6L3.4 0.3H7V5.7H0.3Z" fill="#dcb677"/><path d="M0.3 1.9H7" stroke="#e9cd9b" stroke-width="0.5"/></svg>
<div class="t" style="left:56.85px;top:285.73px;transform:scaleX(0.8738);">External Resources</div>
<svg style="left:37.35px;top:300.89px" width="5.8" height="5.8" viewBox="0 0 5.8 5.8"><rect x="0.4" y="0.4" width="5" height="5" fill="#fbfbfb" stroke="#9aa4ad" stroke-width="0.6"/><path d="M1.2 2.9H4.6" stroke="#555" stroke-width="0.7"/><path d="M2.9 1.2V4.6" stroke="#555" stroke-width="0.7"/></svg>
<svg style="left:46.55px;top:299.89px" width="7.4" height="6" viewBox="0 0 7.4 6"><path d="M0.3 1.2H2.6L3.4 0.3H7V5.7H0.3Z" fill="#dcb677"/><path d="M0.3 1.9H7" stroke="#e9cd9b" stroke-width="0.5"/></svg>
<div class="t" style="left:56.85px;top:297.20px;transform:scaleX(0.8708);">Synonyms</div>
<svg style="left:37.35px;top:312.36px" width="5.8" height="5.8" viewBox="0 0 5.8 5.8"><rect x="0.4" y="0.4" width="5" height="5" fill="#fbfbfb" stroke="#9aa4ad" stroke-width="0.6"/><path d="M1.2 2.9H4.6" stroke="#555" stroke-width="0.7"/><path d="M2.9 1.2V4.6" stroke="#555" stroke-width="0.7"/></svg>
<svg style="left:46.55px;top:311.36px" width="7.4" height="6" viewBox="0 0 7.4 6"><path d="M0.3 1.2H2.6L3.4 0.3H7V5.7H0.3Z" fill="#dcb677"/><path d="M0.3 1.9H7" stroke="#e9cd9b" stroke-width="0.5"/></svg>
<div class="t" style="left:56.85px;top:308.67px;transform:scaleX(0.9500);">Programmability</div>
<svg style="left:37.35px;top:323.83px" width="5.8" height="5.8" viewBox="0 0 5.8 5.8"><rect x="0.4" y="0.4" width="5" height="5" fill="#fbfbfb" stroke="#9aa4ad" stroke-width="0.6"/><path d="M1.2 2.9H4.6" stroke="#555" stroke-width="0.7"/><path d="M2.9 1.2V4.6" stroke="#555" stroke-width="0.7"/></svg>
<svg style="left:46.55px;top:322.83px" width="7.4" height="6" viewBox="0 0 7.4 6"><path d="M0.3 1.2H2.6L3.4 0.3H7V5.7H0.3Z" fill="#dcb677"/><path d="M0.3 1.9H7" stroke="#e9cd9b" stroke-width="0.5"/></svg>
<div class="t" style="left:56.85px;top:320.14px;transform:scaleX(0.8910);">Query Store</div>
<svg style="left:37.35px;top:335.30px" width="5.8" height="5.8" viewBox="0 0 5.8 5.8"><rect x="0.4" y="0.4" width="5" height="5" fill="#fbfbfb" stroke="#9aa4ad" stroke-width="0.6"/><path d="M1.2 2.9H4.6" stroke="#555" stroke-width="0.7"/><path d="M2.9 1.2V4.6" stroke="#555" stroke-width="0.7"/></svg>
<svg style="left:46.55px;top:334.30px" width="7.4" height="6" viewBox="0 0 7.4 6"><path d="M0.3 1.2H2.6L3.4 0.3H7V5.7H0.3Z" fill="#dcb677"/><path d="M0.3 1.9H7" stroke="#e9cd9b" stroke-width="0.5"/></svg>
<div class="t" style="left:56.85px;top:331.61px;transform:scaleX(0.8868);">Service Broker</div>
<svg style="left:37.35px;top:346.77px" width="5.8" height="5.8" viewBox="0 0 5.8 5.8"><rect x="0.4" y="0.4" width="5" height="5" fill="#fbfbfb" stroke="#9aa4ad" stroke-width="0.6"/><path d="M1.2 2.9H4.6" stroke="#555" stroke-width="0.7"/><path d="M2.9 1.2V4.6" stroke="#555" stroke-width="0.7"/></svg>
<svg style="left:46.55px;top:345.77px" width="7.4" height="6" viewBox="0 0 7.4 6"><path d="M0.3 1.2H2.6L3.4 0.3H7V5.7H0.3Z" fill="#dcb677"/><path d="M0.3 1.9H7" stroke="#e9cd9b" stroke-width="0.5"/></svg>
<div class="t" style="left:56.85px;top:343.08px;transform:scaleX(0.9092);">Storage</div>
<svg style="left:37.35px;top:358.24px" width="5.8" height="5.8" viewBox="0 0 5.8 5.8"><rect x="0.4" y="0.4" width="5" height="5" fill="#fbfbfb" stroke="#9aa4ad" stroke-width="0.6"/><path d="M1.2 2.9H4.6" stroke="#555" stroke-width="0.7"/><path d="M2.9 1.2V4.6" stroke="#555" stroke-width="0.7"/></svg>
<svg style="left:46.55px;top:357.24px" width="7.4" height="6" viewBox="0 0 7.4 6"><path d="M0.3 1.2H2.6L3.4 0.3H7V5.7H0.3Z" fill="#dcb677"/><path d="M0.3 1.9H7" stroke="#e9cd9b" stroke-width="0.5"/></svg>
<div class="t" style="left:56.85px;top:354.55px;transform:scaleX(0.8882);">Security</div>
<svg style="left:27.50px;top:369.71px" width="5.8" height="5.8" viewBox="0 0 5.8 5.8"><rect x="0.4" y="0.4" width="5" height="5" fill="#fbfbfb" stroke="#9aa4ad" stroke-width="0.6"/><path d="M1.2 2.9H4.6" stroke="#555" stroke-width="0.7"/><path d="M2.9 1.2V4.6" stroke="#555" stroke-width="0.7"/></svg>
<svg style="left:36.90px;top:368.31px" width="7" height="8" viewBox="0 0 7 8"><path d="M0.5 1.6V6.4C0.5 8 6.5 8 6.5 6.4V1.6Z" fill="#1f1f1f"/><ellipse cx="3.5" cy="1.6" rx="3" ry="1.3" fill="#f2f2f2" stroke="#1f1f1f" stroke-width="0.7"/></svg>
<div class="t" style="left:47.00px;top:366.02px;transform:scaleX(0.8289);">HR_DB</div>
<svg style="left:27.50px;top:381.18px" width="5.8" height="5.8" viewBox="0 0 5.8 5.8"><rect x="0.4" y="0.4" width="5" height="5" fill="#fbfbfb" stroke="#9aa4ad" stroke-width="0.6"/><path d="M1.2 2.9H4.6" stroke="#555" stroke-width="0.7"/><path d="M2.9 1.2V4.6" stroke="#555" stroke-width="0.7"/></svg>
<svg style="left:36.90px;top:379.78px" width="7" height="8" viewBox="0 0 7 8"><path d="M0.5 1.6V6.4C0.5 8 6.5 8 6.5 6.4V1.6Z" fill="#1f1f1f"/><ellipse cx="3.5" cy="1.6" rx="3" ry="1.3" fill="#f2f2f2" stroke="#1f1f1f" stroke-width="0.7"/></svg>
<div class="t" style="left:47.00px;top:377.49px;transform:scaleX(0.8655);">HRDB</div>
<svg style="left:27.50px;top:392.65px" width="5.8" height="5.8" viewBox="0 0 5.8 5.8"><rect x="0.4" y="0.4" width="5" height="5" fill="#fbfbfb" stroke="#9aa4ad" stroke-width="0.6"/><path d="M1.2 2.9H4.6" stroke="#555" stroke-width="0.7"/><path d="M2.9 1.2V4.6" stroke="#555" stroke-width="0.7"/></svg>
<svg style="left:36.90px;top:391.25px" width="7" height="8" viewBox="0 0 7 8"><path d="M0.5 1.6V6.4C0.5 8 6.5 8 6.5 6.4V1.6Z" fill="#1f1f1f"/><ellipse cx="3.5" cy="1.6" rx="3" ry="1.3" fill="#f2f2f2" stroke="#1f1f1f" stroke-width="0.7"/></svg>
<div class="t" style="left:47.00px;top:388.96px;transform:scaleX(0.8718);">m</div>
<svg style="left:27.50px;top:404.12px" width="5.8" height="5.8" viewBox="0 0 5.8 5.8"><rect x="0.4" y="0.4" width="5" height="5" fill="#fbfbfb" stroke="#9aa4ad" stroke-width="0.6"/><path d="M1.2 2.9H4.6" stroke="#555" stroke-width="0.7"/><path d="M2.9 1.2V4.6" stroke="#555" stroke-width="0.7"/></svg>
<svg style="left:36.90px;top:402.72px" width="7" height="8" viewBox="0 0 7 8"><path d="M0.5 1.6V6.4C0.5 8 6.5 8 6.5 6.4V1.6Z" fill="#1f1f1f"/><ellipse cx="3.5" cy="1.6" rx="3" ry="1.3" fill="#f2f2f2" stroke="#1f1f1f" stroke-width="0.7"/></svg>
<div class="t" style="left:47.00px;top:400.43px;transform:scaleX(0.9370);">mahmoud</div>
<svg style="left:27.50px;top:415.59px" width="5.8" height="5.8" viewBox="0 0 5.8 5.8"><rect x="0.4" y="0.4" width="5" height="5" fill="#fbfbfb" stroke="#9aa4ad" stroke-width="0.6"/><path d="M1.2 2.9H4.6" stroke="#555" stroke-width="0.7"/><path d="M2.9 1.2V4.6" stroke="#555" stroke-width="0.7"/></svg>
<svg style="left:36.90px;top:414.19px" width="7" height="8" viewBox="0 0 7 8"><path d="M0.5 1.6V6.4C0.5 8 6.5 8 6.5 6.4V1.6Z" fill="#1f1f1f"/><ellipse cx="3.5" cy="1.6" rx="3" ry="1.3" fill="#f2f2f2" stroke="#1f1f1f" stroke-width="0.7"/></svg>
<div class="t" style="left:47.00px;top:411.90px;transform:scaleX(0.9528);">mmm</div>
<svg style="left:27.50px;top:427.06px" width="5.8" height="5.8" viewBox="0 0 5.8 5.8"><rect x="0.4" y="0.4" width="5" height="5" fill="#fbfbfb" stroke="#9aa4ad" stroke-width="0.6"/><path d="M1.2 2.9H4.6" stroke="#555" stroke-width="0.7"/><path d="M2.9 1.2V4.6" stroke="#555" stroke-width="0.7"/></svg>
<svg style="left:36.90px;top:425.66px" width="7" height="8" viewBox="0 0 7 8"><path d="M0.5 1.6V6.4C0.5 8 6.5 8 6.5 6.4V1.6Z" fill="#1f1f1f"/><ellipse cx="3.5" cy="1.6" rx="3" ry="1.3" fill="#f2f2f2" stroke="#1f1f1f" stroke-width="0.7"/></svg>
<div class="t" style="left:47.00px;top:423.37px;transform:scaleX(0.8289);">sales_DB</div>
<svg style="left:27.50px;top:438.53px" width="5.8" height="5.8" viewBox="0 0 5.8 5.8"><rect x="0.4" y="0.4" width="5" height="5" fill="#fbfbfb" stroke="#9aa4ad" stroke-width="0.6"/><path d="M1.2 2.9H4.6" stroke="#555" stroke-width="0.7"/><path d="M2.9 1.2V4.6" stroke="#555" stroke-width="0.7"/></svg>
<svg style="left:36.90px;top:437.13px" width="7" height="8" viewBox="0 0 7 8"><path d="M0.5 1.6V6.4C0.5 8 6.5 8 6.5 6.4V1.6Z" fill="#1f1f1f"/><ellipse cx="3.5" cy="1.6" rx="3" ry="1.3" fill="#f2f2f2" stroke="#1f1f1f" stroke-width="0.7"/></svg>
<div class="t" style="left:47.00px;top:434.84px;transform:scaleX(0.9085);">test</div>
<svg style="left:17.65px;top:450.00px" width="5.8" height="5.8" viewBox="0 0 5.8 5.8"><rect x="0.4" y="0.4" width="5" height="5" fill="#fbfbfb" stroke="#9aa4ad" stroke-width="0.6"/><path d="M1.2 2.9H4.6" stroke="#555" stroke-width="0.7"/><path d="M2.9 1.2V4.6" stroke="#555" stroke-width="0.7"/></svg>
<svg style="left:26.85px;top:449.00px" width="7.4" height="6" viewBox="0 0 7.4 6"><path d="M0.3 1.2H2.6L3.4 0.3H7V5.7H0.3Z" fill="#dcb677"/><path d="M0.3 1.9H7" stroke="#e9cd9b" stroke-width="0.5"/></svg>
<div class="t" style="left:37.15px;top:446.31px;transform:scaleX(0.8816);">Security</div>
<svg style="left:17.65px;top:461.47px" width="5.8" height="5.8" viewBox="0 0 5.8 5.8"><rect x="0.4" y="0.4" width="5" height="5" fill="#fbfbfb" stroke="#9aa4ad" stroke-width="0.6"/><path d="M1.2 2.9H4.6" stroke="#555" stroke-width="0.7"/><path d="M2.9 1.2V4.6" stroke="#555" stroke-width="0.7"/></svg>
<svg style="left:26.85px;top:460.47px" width="7.4" height="6" viewBox="0 0 7.4 6"><path d="M0.3 1.2H2.6L3.4 0.3H7V5.7H0.3Z" fill="#dcb677"/><path d="M0.3 1.9H7" stroke="#e9cd9b" stroke-width="0.5"/></svg>
<div class="t" style="left:37.15px;top:457.78px;transform:scaleX(0.8794);">Server Objects</div>
<svg style="left:17.65px;top:472.94px" width="5.8" height="5.8" viewBox="0 0 5.8 5.8"><rect x="0.4" y="0.4" width="5" height="5" fill="#fbfbfb" stroke="#9aa4ad" stroke-width="0.6"/><path d="M1.2 2.9H4.6" stroke="#555" stroke-width="0.7"/><path d="M2.9 1.2V4.6" stroke="#555" stroke-width="0.7"/></svg>
<svg style="left:26.85px;top:471.94px" width="7.4" height="6" viewBox="0 0 7.4 6"><path d="M0.3 1.2H2.6L3.4 0.3H7V5.7H0.3Z" fill="#dcb677"/><path d="M0.3 1.9H7" stroke="#e9cd9b" stroke-width="0.5"/></svg>
<div class="t" style="left:37.15px;top:469.25px;transform:scaleX(0.9325);">Replication</div>
<svg style="left:17.65px;top:484.41px" width="5.8" height="5.8" viewBox="0 0 5.8 5.8"><rect x="0.4" y="0.4" width="5" height="5" fill="#fbfbfb" stroke="#9aa4ad" stroke-width="0.6"/><path d="M1.2 2.9H4.6" stroke="#555" stroke-width="0.7"/><path d="M2.9 1.2V4.6" stroke="#555" stroke-width="0.7"/></svg>
<svg style="left:26.85px;top:483.41px" width="7.4" height="6" viewBox="0 0 7.4 6"><path d="M0.3 1.2H2.6L3.4 0.3H7V5.7H0.3Z" fill="#dcb677"/><path d="M0.3 1.9H7" stroke="#e9cd9b" stroke-width="0.5"/></svg>
<div class="t" style="left:37.15px;top:480.72px;transform:scaleX(0.9290);">Management</div>
<svg style="left:17.65px;top:495.88px" width="5.8" height="5.8" viewBox="0 0 5.8 5.8"><rect x="0.4" y="0.4" width="5" height="5" fill="#fbfbfb" stroke="#9aa4ad" stroke-width="0.6"/><path d="M1.2 2.9H4.6" stroke="#555" stroke-width="0.7"/><path d="M2.9 1.2V4.6" stroke="#555" stroke-width="0.7"/></svg>
<svg style="left:26.85px;top:494.68px" width="7.4" height="7.4" viewBox="0 0 7.4 7.4"><rect x="0.4" y="0.4" width="6.4" height="6.4" fill="#fff" stroke="#333" stroke-width="0.7"/><path d="M3.6 1.6V5.4M2.2 3L3.6 1.6L5 3" stroke="#333" stroke-width="0.7" fill="none"/></svg>
<div class="t" style="left:37.15px;top:492.19px;transform:scaleX(0.8898);">XEvent Profiler</div>
<!-- document tab well -->
<div class="a" style="left:230.10px;top:65.80px;width:767.00px;height:16.60px;background:#c6d9e9;"></div>
<div class="a" style="left:230.10px;top:82.00px;width:1.40px;height:430.80px;background:#8fa3b5;"></div>
<div class="a" style="left:995.90px;top:82.00px;width:1.20px;height:430.80px;background:#7f95aa;"></div>
<div class="a" style="left:230.10px;top:511.70px;width:767.00px;height:1.20px;background:#647f8a;"></div>
<div class="a" style="left:231.50px;top:82.00px;width:764.80px;height:216.20px;background:#ffffff;border-top:0.8px solid #6f7d89;"></div>
<div class="a" style="left:230.60px;top:66.40px;width:138.40px;height:16.40px;background:#ffffff;border:0.7px solid #8593a0;border-bottom:none;border-radius:3px 3px 0 0;"></div>
<div class="t" style="left:235.00px;top:68.71px;color:#111;font-weight:bold;transform:scaleX(0.9675);">SQLQuery1....QN\IT (79))*</div>
<svg style="left:341.50px;top:71.40px" width="7" height="8" viewBox="0 0 7 8"><path d="M3.8 0.6L6.4 3.2L5.6 3.6L4.6 5L4.4 6L1.2 2.8L2.2 2.6L3.6 1.4Z" fill="none" stroke="#222" stroke-width="0.7" stroke-linejoin="round"/><path d="M2.6 4.6L0.6 6.8" stroke="#222" stroke-width="0.7"/></svg>
<svg style="left:357.00px;top:71.60px" width="7" height="7" viewBox="0 0 7 7"><path d="M0.4 0.4L6.6 6.6M6.6 0.4L0.4 6.6" stroke="#222" stroke-width="0.8" stroke-linecap="round"/></svg>
<div class="a" style="left:969.60px;top:73.80px;width:1.20px;height:1.20px;background:#333;border-radius:1px;"></div>
<div class="a" style="left:972.10px;top:73.80px;width:1.20px;height:1.20px;background:#333;border-radius:1px;"></div>
<div class="a" style="left:974.60px;top:73.80px;width:1.20px;height:1.20px;background:#333;border-radius:1px;"></div>
<svg style="left:984.60px;top:70.40px" width="8.2" height="8.2" viewBox="0 0 8.2 8.2"><path d="M4.10 0.20 L5.60 1.50 L7.48 2.15 L7.10 4.10 L7.48 6.05 L5.60 6.70 L4.10 8.00 L2.60 6.70 L0.72 6.05 L1.10 4.10 L0.72 2.15 L2.60 1.50Z" fill="none" stroke="#2a2a2a" stroke-width="0.8" stroke-linejoin="round"/><circle cx="4.1" cy="4.1" r="1.3" fill="none" stroke="#2a2a2a" stroke-width="0.7"/></svg>
<!-- editor -->
<div class="a" style="left:231.50px;top:82.80px;width:10.30px;height:215.40px;background:#e9eaec;"></div>
<div class="a" style="left:270.30px;top:82.80px;width:3.20px;height:215.40px;background:#f4e5a3;border-left:0.6px solid #e2cf86;border-right:0.6px solid #e2cf86;"></div>
<div class="a" style="left:287.00px;top:259.80px;width:134.00px;height:11.30px;background:#b2d0ea;"></div>
<div class="a" style="left:286.60px;top:259.80px;width:1.00px;height:11.30px;background:#111;"></div>
<div class="a m" style="left:0;top:0;width:1000px;height:298.2px;overflow:hidden;clip-path:inset(82.8px 0 0 0)">
<div class="ln" style="left:247.2px;top:83.20px;color:#7f8b93">41</div>
<div class="ln" style="left:247.2px;top:94.25px;color:#7f8b93">42</div>
<div class="cl" style="left:287.5px;top:94.25px"><span style="color:#ff00ff">update</span> <span class="q" style="color:#1e1e1e">employees</span></div>
<div class="ln" style="left:247.2px;top:105.30px;color:#7f8b93">43</div>
<div class="cl" style="left:287.5px;top:105.30px"><span style="color:#0000ff">set</span> <span class="q" style="color:#1e1e1e">term_condition</span><span style="color:#808080">=</span></div>
<div class="ln" style="left:247.2px;top:116.35px;color:#7f8b93">44</div>
<div class="cl" style="left:287.5px;top:116.35px"><span style="color:#0000ff">case</span></div>
<div class="ln" style="left:247.2px;top:127.40px;color:#7f8b93">45</div>
<div class="cl" style="left:287.5px;top:127.40px">  <span style="color:#0000ff">when</span> <span class="q" style="color:#1e1e1e">termdate_new</span><span style="color:#808080">&gt;</span><span style="color:#ff00ff">format</span><span style="color:#808080">(</span><span style="color:#ff00ff">getdate</span><span style="color:#808080">(),</span><span style="color:#e21f1f">'yyyy-MM-dd'</span><span style="color:#808080">)</span> <span style="color:#808080">or</span> <span class="q" style="color:#1e1e1e">termdate_new</span> <span style="color:#808080">is</span> <span style="color:#808080">null</span> <span style="color:#0000ff">then</span> <span style="color:#e21f1f">'Still Working'</span></div>
<div class="ln" style="left:247.2px;top:138.45px;color:#7f8b93">46</div>
<div class="cl" style="left:287.5px;top:138.45px">  <span style="color:#0000ff">else</span> <span style="color:#e21f1f">'term'</span></div>
<div class="ln" style="left:247.2px;top:149.50px;color:#7f8b93">47</div>
<div class="cl" style="left:287.5px;top:149.50px"><span style="color:#0000ff">end</span></div>
<div class="ln" style="left:247.2px;top:160.55px;color:#7f8b93">48</div>
<div class="cl" style="left:287.5px;top:160.55px"><span style="color:#0000ff">alter</span> <span style="color:#0000ff">table</span> <span style="color:#1e1e1e">employees</span></div>
<div class="ln" style="left:247.2px;top:171.60px;color:#7f8b93">49</div>
<div class="cl" style="left:287.5px;top:171.60px"><span style="color:#0000ff">add</span> <span style="color:#1e1e1e">working_in_years</span> <span style="color:#0000ff">int</span></div>
<div class="ln" style="left:247.2px;top:182.65px;color:#7f8b93">50</div>
<div class="ln" style="left:247.2px;top:193.70px;color:#7f8b93">51</div>
<div class="cl" style="left:287.5px;top:193.70px"><span style="color:#ff00ff">update</span> <span class="q" style="color:#1e1e1e">employees</span></div>
<div class="ln" style="left:247.2px;top:204.75px;color:#7f8b93">52</div>
<div class="cl" style="left:287.5px;top:204.75px"><span style="color:#0000ff">set</span> <span class="q" style="color:#1e1e1e">working_in_years</span><span style="color:#808080">=</span></div>
<div class="ln" style="left:247.2px;top:215.80px;color:#7f8b93">53</div>
<div class="cl" style="left:287.5px;top:215.80px">   <span style="color:#0000ff">case</span></div>
<div class="ln" style="left:247.2px;top:226.85px;color:#7f8b93">54</div>
<div class="cl" style="left:287.5px;top:226.85px">   <span style="color:#0000ff">when</span> <span class="q" style="color:#1e1e1e">termdate_new</span><span style="color:#808080">&lt;</span><span style="color:#ff00ff">format</span><span style="color:#808080">(</span><span style="color:#ff00ff">getdate</span><span style="color:#808080">(),</span><span style="color:#e21f1f">'yyyy-MM-dd'</span><span style="color:#808080">)</span> <span style="color:#0000ff">then</span> <span style="color:#ff00ff">datediff</span><span style="color:#808080">(</span><span style="color:#ff00ff">year</span><span style="color:#808080">,</span><span class="q" style="color:#1e1e1e">hire_date</span><span style="color:#808080">,</span><span class="q" style="color:#1e1e1e">termdate_new</span><span style="color:#808080">)</span></div>
<div class="ln" style="left:247.2px;top:237.90px;color:#7f8b93">55</div>
<div class="cl" style="left:287.5px;top:237.90px">   <span style="color:#0000ff">else</span> <span style="color:#ff00ff">datediff</span><span style="color:#808080">(</span><span style="color:#ff00ff">year</span><span style="color:#808080">,</span><span class="q" style="color:#1e1e1e">hire_date</span><span style="color:#808080">,</span><span style="color:#ff00ff">format</span><span style="color:#808080">(</span><span style="color:#ff00ff">getdate</span><span style="color:#808080">(),</span><span style="color:#e21f1f">'yyyy-MM-dd'</span><span style="color:#808080">)</span><span style="color:#808080">)</span></div>
<div class="ln" style="left:247.2px;top:248.95px;color:#7f8b93">56</div>
<div class="cl" style="left:287.5px;top:248.95px">   <span style="color:#0000ff">end</span></div>
<div class="ln" style="left:247.2px;top:260.00px;color:#1e1e1e">57</div>
<div class="cl" style="left:287.5px;top:260.00px">   <span style="color:#0000ff">select</span> <span style="color:#808080;position:relative;top:1.4px">*</span> <span style="color:#0000ff">from</span> <span class="q" style="color:#1e1e1e">employees</span></div>
<div class="ln" style="left:247.2px;top:271.05px;color:#7f8b93">58</div>
<div class="ln" style="left:247.2px;top:282.10px;color:#7f8b93">59</div>
<div class="ln" style="left:247.2px;top:293.15px;color:#7f8b93">60</div>
</div>
<svg style="left:985.00px;top:85.40px" width="9" height="8.6" viewBox="0 0 9 8.6"><rect x="1.1" y="0.5" width="6.6" height="7.6" rx="1.5" fill="none" stroke="#5a5a5a" stroke-width="0.8"/><path d="M0.2 4.3H8.6" stroke="#5a5a5a" stroke-width="0.8"/></svg>
<div class="a" style="left:983.00px;top:107.80px;width:3.80px;height:136.60px;background:#fffdf2;border:0.6px solid #cdb75f;"></div>
<div class="a" style="left:992.00px;top:112.30px;width:4.60px;height:3.90px;background:#f00505;"></div>
<div class="a" style="left:992.00px;top:119.60px;width:4.60px;height:26.00px;background:#f00505;"></div>
<div class="a" style="left:992.00px;top:164.80px;width:4.60px;height:10.40px;background:#f00505;"></div>
<div class="a" style="left:992.00px;top:178.80px;width:4.60px;height:13.20px;background:#f00505;"></div>
<div class="a" style="left:992.00px;top:199.10px;width:4.60px;height:12.00px;background:#f00505;"></div>
<div class="a" style="left:992.00px;top:219.90px;width:4.60px;height:17.60px;background:#f00505;"></div>
<div class="a" style="left:986.80px;top:200.00px;width:5.20px;height:42.30px;background:#8b8b8b;border-radius:2.6px;"></div>
<div class="a" style="left:983.40px;top:233.50px;width:12.40px;height:2.30px;background:#1717a6;"></div>
<!-- editor status strip -->
<div class="a" style="left:231.50px;top:298.20px;width:764.80px;height:18.00px;background:#f6f7f9;"></div>
<div class="a" style="left:232.50px;top:300.00px;width:45.50px;height:12.40px;background:#fdfdfe;border-radius:2px;"></div>
<div class="t" style="left:235.40px;top:299.71px;transform:scaleX(0.8649);">100 %</div>
<svg style="left:269.40px;top:304.40px" width="6.4" height="4.4" viewBox="0 0 6.4 4.4"><path d="M1 0.99 L3.20 3.19 L5.40 0.99" fill="none" stroke="#333" stroke-width="1.0" stroke-linecap="round" stroke-linejoin="round"/></svg>
<svg style="left:298.00px;top:301.40px" width="9.4" height="9.4" viewBox="0 0 9.4 9.4"><circle cx="4.7" cy="4.7" r="4.5" fill="#d9232e"/><path d="M3 3L6.4 6.4M6.4 3L3 6.4" stroke="#fff" stroke-width="1"/></svg>
<div class="t" style="left:311.40px;top:299.71px;transform:scaleX(0.8562);">40</div>
<svg style="left:327.00px;top:301.60px" width="9" height="8.6" viewBox="0 0 9 8.6"><path d="M4.5 0.5L8.6 8H0.4Z" fill="#e5a50a" stroke="#c98b00" stroke-width="0.5" stroke-linejoin="round"/><path d="M4.5 3V5.6M4.5 6.4V7.2" stroke="#3a2a00" stroke-width="0.8"/></svg>
<div class="t" style="left:340.00px;top:299.71px;transform:scaleX(0.8562);">0</div>
<div class="a" style="left:349.20px;top:301.00px;width:0.70px;height:10.50px;background:#dfe4ea;"></div>
<svg style="left:355.00px;top:302.00px" width="8" height="8.4" viewBox="0 0 8 8.4"><path d="M4 8V0.8M1 3.8L4 0.8L7 3.8" fill="none" stroke="#222" stroke-width="0.9" stroke-linecap="round" stroke-linejoin="round"/></svg>
<svg style="left:370.60px;top:302.00px" width="8" height="8.4" viewBox="0 0 8 8.4"><path d="M4 0.4V7.6M1 4.6L4 7.6L7 4.6" fill="none" stroke="#222" stroke-width="0.9" stroke-linecap="round" stroke-linejoin="round"/></svg>
<div class="t" style="left:776.00px;top:299.91px;transform:scaleX(0.8316);">Ln: 57, Ch: 1</div>
<div class="t" style="left:824.40px;top:299.91px;transform:scaleX(0.8837);">(28 chars, 1 lines)</div>
<div class="t" style="left:892.00px;top:299.91px;transform:scaleX(0.7977);">TABS</div>
<div class="t" style="left:917.40px;top:299.91px;transform:scaleX(0.7750);">CRLF</div>
<div class="t" style="left:942.60px;top:299.91px;transform:scaleX(0.9220);">Windows 1252</div>
<!-- results pane -->
<div class="a" style="left:231.50px;top:316.20px;width:764.80px;height:182.40px;background:#f4f5f7;"></div>
<div class="a" style="left:232.00px;top:317.00px;width:42.40px;height:12.00px;background:#f7f9fc;border:0.6px solid #dfe3e8;border-bottom:none;"></div>
<div class="a" style="left:274.40px;top:317.60px;width:50.00px;height:11.40px;background:#f1f2f5;border:0.6px solid #d5dbe2;border-bottom:none;"></div>
<svg style="left:236.00px;top:319.60px" width="6.4" height="6.4" viewBox="0 0 6.4 6.4"><rect x="0.7" y="0.7" width="5" height="5" rx="1" fill="#fff" stroke="#1a1a1a" stroke-width="1.4"/><path d="M0.6 3.2H5.8M3.2 0.6V5.8" stroke="#1a1a1a" stroke-width="1.1"/></svg>
<div class="t" style="left:246.00px;top:316.53px;font-size:7.8px;color:#151515;transform:scaleX(0.8843);-webkit-text-stroke:0.15px;">Results</div>
<svg style="left:276.40px;top:319.00px" width="7" height="7.4" viewBox="0 0 7 7.4"><path d="M2.4 0.5H5.4L6.6 1.7V6.6H2.4Z" fill="#fff" stroke="#333" stroke-width="0.7"/><rect x="0.3" y="3" width="3" height="3.8" rx="0.5" fill="#1b1b1b"/></svg>
<div class="t" style="left:287.00px;top:316.53px;font-size:7.8px;color:#151515;transform:scaleX(0.9283);-webkit-text-stroke:0.15px;">Messages</div>
<div class="a" style="left:232.40px;top:328.80px;width:763.00px;height:168.60px;background:#fafafa;border:0.7px solid #c9cfd6;"></div>
<div class="a" style="left:233.40px;top:329.20px;width:748.00px;height:10.60px;background:#f3f4f6;"></div>
<div class="a" style="left:233.40px;top:329.20px;width:18.80px;height:155.60px;background:#f3f4f6;"></div>
<div class="a" style="left:0;top:0;width:1000px;height:484.6px;overflow:hidden">
<div class="a" style="left:631.40px;top:340.10px;width:81.40px;height:9.90px;background:#fdf8a4;"></div>
<div class="a" style="left:823.60px;top:340.10px;width:48.80px;height:9.90px;background:#fdf8a4;"></div>
<div class="a" style="left:631.40px;top:350.50px;width:81.40px;height:9.90px;background:#fdf8a4;"></div>
<div class="a" style="left:823.60px;top:350.50px;width:48.80px;height:9.90px;background:#fdf8a4;"></div>
<div class="a" style="left:631.40px;top:360.90px;width:81.40px;height:9.90px;background:#fdf8a4;"></div>
<div class="a" style="left:823.60px;top:360.90px;width:48.80px;height:9.90px;background:#fdf8a4;"></div>
<div class="a" style="left:631.40px;top:371.30px;width:81.40px;height:9.90px;background:#fdf8a4;"></div>
<div class="a" style="left:823.60px;top:371.30px;width:48.80px;height:9.90px;background:#fdf8a4;"></div>
<div class="a" style="left:631.40px;top:392.10px;width:81.40px;height:9.90px;background:#fdf8a4;"></div>
<div class="a" style="left:823.60px;top:392.10px;width:48.80px;height:9.90px;background:#fdf8a4;"></div>
<div class="a" style="left:631.40px;top:402.50px;width:81.40px;height:9.90px;background:#fdf8a4;"></div>
<div class="a" style="left:823.60px;top:402.50px;width:48.80px;height:9.90px;background:#fdf8a4;"></div>
<div class="a" style="left:631.40px;top:412.90px;width:81.40px;height:9.90px;background:#fdf8a4;"></div>
<div class="a" style="left:823.60px;top:412.90px;width:48.80px;height:9.90px;background:#fdf8a4;"></div>
<div class="a" style="left:631.40px;top:433.70px;width:81.40px;height:9.90px;background:#fdf8a4;"></div>
<div class="a" style="left:823.60px;top:433.70px;width:48.80px;height:9.90px;background:#fdf8a4;"></div>
<div class="a" style="left:631.40px;top:444.10px;width:81.40px;height:9.90px;background:#fdf8a4;"></div>
<div class="a" style="left:823.60px;top:444.10px;width:48.80px;height:9.90px;background:#fdf8a4;"></div>
<div class="a" style="left:631.40px;top:454.50px;width:81.40px;height:9.90px;background:#fdf8a4;"></div>
<div class="a" style="left:823.60px;top:454.50px;width:48.80px;height:9.90px;background:#fdf8a4;"></div>
<div class="a" style="left:631.40px;top:464.90px;width:81.40px;height:9.90px;background:#fdf8a4;"></div>
<div class="a" style="left:823.60px;top:464.90px;width:48.80px;height:9.90px;background:#fdf8a4;"></div>
<div class="a" style="left:631.40px;top:475.30px;width:81.40px;height:9.90px;background:#fdf8a4;"></div>
<div class="a" style="left:823.60px;top:475.30px;width:48.80px;height:9.90px;background:#fdf8a4;"></div>
<div class="a" style="left:233.40px;top:339.50px;width:748.00px;height:0.60px;background:#e4e6ea;"></div>
<div class="a" style="left:233.40px;top:349.90px;width:748.00px;height:0.60px;background:#e4e6ea;"></div>
<div class="a" style="left:233.40px;top:360.30px;width:748.00px;height:0.60px;background:#e4e6ea;"></div>
<div class="a" style="left:233.40px;top:370.70px;width:748.00px;height:0.60px;background:#e4e6ea;"></div>
<div class="a" style="left:233.40px;top:381.10px;width:748.00px;height:0.60px;background:#e4e6ea;"></div>
<div class="a" style="left:233.40px;top:391.50px;width:748.00px;height:0.60px;background:#e4e6ea;"></div>
<div class="a" style="left:233.40px;top:401.90px;width:748.00px;height:0.60px;background:#e4e6ea;"></div>
<div class="a" style="left:233.40px;top:412.30px;width:748.00px;height:0.60px;background:#e4e6ea;"></div>
<div class="a" style="left:233.40px;top:422.70px;width:748.00px;height:0.60px;background:#e4e6ea;"></div>
<div class="a" style="left:233.40px;top:433.10px;width:748.00px;height:0.60px;background:#e4e6ea;"></div>
<div class="a" style="left:233.40px;top:443.50px;width:748.00px;height:0.60px;background:#e4e6ea;"></div>
<div class="a" style="left:233.40px;top:453.90px;width:748.00px;height:0.60px;background:#e4e6ea;"></div>
<div class="a" style="left:233.40px;top:464.30px;width:748.00px;height:0.60px;background:#e4e6ea;"></div>
<div class="a" style="left:233.40px;top:474.70px;width:748.00px;height:0.60px;background:#e4e6ea;"></div>
<div class="a" style="left:233.40px;top:485.10px;width:748.00px;height:0.60px;background:#e4e6ea;"></div>
<div class="a" style="left:233.40px;top:329.00px;width:748.00px;height:0.60px;background:#c9cfd6;"></div>
<div class="a" style="left:233.10px;top:329.20px;width:0.60px;height:156.00px;background:#e4e6ea;"></div>
<div class="a" style="left:251.90px;top:329.20px;width:0.60px;height:156.00px;background:#e4e6ea;"></div>
<div class="a" style="left:265.90px;top:329.20px;width:0.60px;height:156.00px;background:#e4e6ea;"></div>
<div class="a" style="left:346.30px;top:329.20px;width:0.60px;height:156.00px;background:#e4e6ea;"></div>
<div class="a" style="left:420.00px;top:329.20px;width:0.60px;height:156.00px;background:#e4e6ea;"></div>
<div class="a" style="left:541.50px;top:329.20px;width:0.60px;height:156.00px;background:#e4e6ea;"></div>
<div class="a" style="left:588.70px;top:329.20px;width:0.60px;height:156.00px;background:#e4e6ea;"></div>
<div class="a" style="left:630.70px;top:329.20px;width:0.60px;height:156.00px;background:#e4e6ea;"></div>
<div class="a" style="left:712.70px;top:329.20px;width:0.60px;height:156.00px;background:#e4e6ea;"></div>
<div class="a" style="left:755.70px;top:329.20px;width:0.60px;height:156.00px;background:#e4e6ea;"></div>
<div class="a" style="left:803.70px;top:329.20px;width:0.60px;height:156.00px;background:#e4e6ea;"></div>
<div class="a" style="left:822.90px;top:329.20px;width:0.60px;height:156.00px;background:#e4e6ea;"></div>
<div class="a" style="left:872.30px;top:329.20px;width:0.60px;height:156.00px;background:#e4e6ea;"></div>
<div class="a" style="left:923.10px;top:329.20px;width:0.60px;height:156.00px;background:#e4e6ea;"></div>
<div class="a" style="left:981.10px;top:329.20px;width:0.60px;height:156.00px;background:#e4e6ea;"></div>
<div class="a" style="left:252.50px;top:329.2px;width:13.40px;height:10.6px;overflow:hidden"><div class="g" style="right:7.3px;top:1.9px;transform-origin:100% 50%">gender</div></div>
<div class="g" style="top:331.50px;color:#1e1e1e;left:269.40px;">race</div>
<div class="g" style="top:331.50px;color:#1e1e1e;left:350.20px;">department</div>
<div class="g" style="top:331.50px;color:#1e1e1e;left:423.90px;">jobtitle</div>
<div class="g" style="top:331.50px;color:#1e1e1e;left:545.00px;">location</div>
<div class="g" style="top:331.50px;color:#1e1e1e;left:592.20px;">hire_date</div>
<div class="g" style="top:331.50px;color:#1e1e1e;left:634.20px;">termdate</div>
<div class="g" style="top:331.50px;color:#1e1e1e;left:716.20px;">location_city</div>
<div class="g" style="top:331.50px;color:#1e1e1e;left:759.20px;">location_state</div>
<div class="g" style="top:331.50px;color:#1e1e1e;left:807.20px;">age</div>
<div class="g" style="top:331.50px;color:#1e1e1e;left:826.40px;">termdate_new</div>
<div class="g" style="top:331.50px;color:#1e1e1e;left:875.80px;">term_condition</div>
<div class="g" style="top:331.50px;color:#1e1e1e;left:926.60px;">working_in_years</div>
<div class="g" style="top:341.80px;color:#1e1e1e;left:237.20px;">1</div>
<div class="a" style="left:252.50px;top:340.00px;width:13.40px;height:10px;overflow:hidden"><div class="g" style="right:11.8px;top:1.4px;transform-origin:100% 50%">Male</div></div>
<div class="g" style="top:341.80px;color:#1e1e1e;left:269.80px;">Hispanic or Latino</div>
<div class="g" style="top:341.80px;color:#1e1e1e;left:350.60px;">Engineering</div>
<div class="g" style="top:341.80px;color:#1e1e1e;left:424.30px;">Programmer Analyst I</div>
<div class="g" style="top:341.80px;color:#1e1e1e;left:545.40px;">Headquarters</div>
<div class="g" style="top:341.80px;color:#1e1e1e;left:592.60px;">2002-01-20</div>
<div class="g" style="top:341.80px;color:#1e1e1e;left:634.60px;">NULL</div>
<div class="g" style="top:341.80px;color:#1e1e1e;left:716.60px;">Cleveland</div>
<div class="g" style="top:341.80px;color:#1e1e1e;left:759.60px;">Ohio</div>
<div class="g" style="top:341.80px;color:#1e1e1e;left:807.60px;">35</div>
<div class="g" style="top:341.80px;color:#1e1e1e;left:826.80px;">NULL</div>
<div class="g" style="top:341.80px;color:#1e1e1e;left:876.20px;">Still Working</div>
<div class="g" style="top:341.80px;color:#1e1e1e;left:927.00px;">24</div>
<div class="g" style="top:352.20px;color:#1e1e1e;left:237.20px;">2</div>
<div class="a" style="left:252.50px;top:350.40px;width:13.40px;height:10px;overflow:hidden"><div class="g" style="right:11.8px;top:1.4px;transform-origin:100% 50%">Male</div></div>
<div class="g" style="top:352.20px;color:#1e1e1e;left:269.80px;">White</div>
<div class="g" style="top:352.20px;color:#1e1e1e;left:350.60px;">Business Development</div>
<div class="g" style="top:352.20px;color:#1e1e1e;left:424.30px;">Business Analyst</div>
<div class="g" style="top:352.20px;color:#1e1e1e;left:545.40px;">Headquarters</div>
<div class="g" style="top:352.20px;color:#1e1e1e;left:592.60px;">2019-04-08</div>
<div class="g" style="top:352.20px;color:#1e1e1e;left:634.60px;">NULL</div>
<div class="g" style="top:352.20px;color:#1e1e1e;left:716.60px;">Cleveland</div>
<div class="g" style="top:352.20px;color:#1e1e1e;left:759.60px;">Ohio</div>
<div class="g" style="top:352.20px;color:#1e1e1e;left:807.60px;">42</div>
<div class="g" style="top:352.20px;color:#1e1e1e;left:826.80px;">NULL</div>
<div class="g" style="top:352.20px;color:#1e1e1e;left:876.20px;">Still Working</div>
<div class="g" style="top:352.20px;color:#1e1e1e;left:927.00px;">7</div>
<div class="g" style="top:362.60px;color:#1e1e1e;left:237.20px;">3</div>
<div class="a" style="left:252.50px;top:360.80px;width:13.40px;height:10px;overflow:hidden"><div class="g" style="right:11.8px;top:1.4px;transform-origin:100% 50%">Male</div></div>
<div class="g" style="top:362.60px;color:#1e1e1e;left:269.80px;">Black or African American</div>
<div class="g" style="top:362.60px;color:#1e1e1e;left:350.60px;">Sales</div>
<div class="g" style="top:362.60px;color:#1e1e1e;left:424.30px;">Solutions Engineer Manager</div>
<div class="g" style="top:362.60px;color:#1e1e1e;left:545.40px;">Headquarters</div>
<div class="g" style="top:362.60px;color:#1e1e1e;left:592.60px;">2010-10-12</div>
<div class="g" style="top:362.60px;color:#1e1e1e;left:634.60px;">NULL</div>
<div class="g" style="top:362.60px;color:#1e1e1e;left:716.60px;">Cleveland</div>
<div class="g" style="top:362.60px;color:#1e1e1e;left:759.60px;">Ohio</div>
<div class="g" style="top:362.60px;color:#1e1e1e;left:807.60px;">37</div>
<div class="g" style="top:362.60px;color:#1e1e1e;left:826.80px;">NULL</div>
<div class="g" style="top:362.60px;color:#1e1e1e;left:876.20px;">Still Working</div>
<div class="g" style="top:362.60px;color:#1e1e1e;left:927.00px;">16</div>
<div class="g" style="top:373.00px;color:#1e1e1e;left:237.20px;">4</div>
<div class="a" style="left:252.50px;top:371.20px;width:13.40px;height:10px;overflow:hidden"><div class="g" style="right:4.5px;top:1.4px;transform-origin:100% 50%">Female</div></div>
<div class="g" style="top:373.00px;color:#1e1e1e;left:269.80px;">White</div>
<div class="g" style="top:373.00px;color:#1e1e1e;left:350.60px;">Services</div>
<div class="g" style="top:373.00px;color:#1e1e1e;left:424.30px;">Service Tech</div>
<div class="g" style="top:373.00px;color:#1e1e1e;left:545.40px;">Headquarters</div>
<div class="g" style="top:373.00px;color:#1e1e1e;left:592.60px;">2005-04-10</div>
<div class="g" style="top:373.00px;color:#1e1e1e;left:634.60px;">NULL</div>
<div class="g" style="top:373.00px;color:#1e1e1e;left:716.60px;">Cleveland</div>
<div class="g" style="top:373.00px;color:#1e1e1e;left:759.60px;">Ohio</div>
<div class="g" style="top:373.00px;color:#1e1e1e;left:807.60px;">44</div>
<div class="g" style="top:373.00px;color:#1e1e1e;left:826.80px;">NULL</div>
<div class="g" style="top:373.00px;color:#1e1e1e;left:876.20px;">Still Working</div>
<div class="g" style="top:373.00px;color:#1e1e1e;left:927.00px;">21</div>
<div class="g" style="top:383.40px;color:#1e1e1e;left:237.20px;">5</div>
<div class="a" style="left:252.50px;top:381.60px;width:13.40px;height:10px;overflow:hidden"><div class="g" style="right:4.5px;top:1.4px;transform-origin:100% 50%">Female</div></div>
<div class="g" style="top:383.40px;color:#1e1e1e;left:269.80px;">Two or More Races</div>
<div class="g" style="top:383.40px;color:#1e1e1e;left:350.60px;">Product Management</div>
<div class="g" style="top:383.40px;color:#1e1e1e;left:424.30px;">Business Analyst</div>
<div class="g" style="top:383.40px;color:#1e1e1e;left:545.40px;">Remote</div>
<div class="g" style="top:383.40px;color:#1e1e1e;left:592.60px;">2010-09-29</div>
<div class="g" style="top:383.40px;color:#1e1e1e;left:634.60px;">2029-10-29 06:09:38 UTC</div>
<div class="g" style="top:383.40px;color:#1e1e1e;left:716.60px;">Flint</div>
<div class="g" style="top:383.40px;color:#1e1e1e;left:759.60px;">Michigan</div>
<div class="g" style="top:383.40px;color:#1e1e1e;left:807.60px;">32</div>
<div class="g" style="top:383.40px;color:#1e1e1e;left:826.80px;">2029-10-29</div>
<div class="g" style="top:383.40px;color:#1e1e1e;left:876.20px;">Still Working</div>
<div class="g" style="top:383.40px;color:#1e1e1e;left:927.00px;">16</div>
<div class="g" style="top:393.80px;color:#1e1e1e;left:237.20px;">6</div>
<div class="a" style="left:252.50px;top:392.00px;width:13.40px;height:10px;overflow:hidden"><div class="g" style="right:11.8px;top:1.4px;transform-origin:100% 50%">Male</div></div>
<div class="g" style="top:393.80px;color:#1e1e1e;left:269.80px;">Asian</div>
<div class="g" style="top:393.80px;color:#1e1e1e;left:350.60px;">Engineering</div>
<div class="g" style="top:393.80px;color:#1e1e1e;left:424.30px;">Developer III</div>
<div class="g" style="top:393.80px;color:#1e1e1e;left:545.40px;">Headquarters</div>
<div class="g" style="top:393.80px;color:#1e1e1e;left:592.60px;">2018-09-01</div>
<div class="g" style="top:393.80px;color:#1e1e1e;left:634.60px;">NULL</div>
<div class="g" style="top:393.80px;color:#1e1e1e;left:716.60px;">Cleveland</div>
<div class="g" style="top:393.80px;color:#1e1e1e;left:759.60px;">Ohio</div>
<div class="g" style="top:393.80px;color:#1e1e1e;left:807.60px;">55</div>
<div class="g" style="top:393.80px;color:#1e1e1e;left:826.80px;">NULL</div>
<div class="g" style="top:393.80px;color:#1e1e1e;left:876.20px;">Still Working</div>
<div class="g" style="top:393.80px;color:#1e1e1e;left:927.00px;">8</div>
<div class="g" style="top:404.20px;color:#1e1e1e;left:237.20px;">7</div>
<div class="a" style="left:252.50px;top:402.40px;width:13.40px;height:10px;overflow:hidden"><div class="g" style="right:11.8px;top:1.4px;transform-origin:100% 50%">Male</div></div>
<div class="g" style="top:404.20px;color:#1e1e1e;left:269.80px;">Two or More Races</div>
<div class="g" style="top:404.20px;color:#1e1e1e;left:350.60px;">Product Management</div>
<div class="g" style="top:404.20px;color:#1e1e1e;left:424.30px;">Quality Engineer</div>
<div class="g" style="top:404.20px;color:#1e1e1e;left:545.40px;">Headquarters</div>
<div class="g" style="top:404.20px;color:#1e1e1e;left:592.60px;">2012-11-08</div>
<div class="g" style="top:404.20px;color:#1e1e1e;left:634.60px;">NULL</div>
<div class="g" style="top:404.20px;color:#1e1e1e;left:716.60px;">Cleveland</div>
<div class="g" style="top:404.20px;color:#1e1e1e;left:759.60px;">Ohio</div>
<div class="g" style="top:404.20px;color:#1e1e1e;left:807.60px;">47</div>
<div class="g" style="top:404.20px;color:#1e1e1e;left:826.80px;">NULL</div>
<div class="g" style="top:404.20px;color:#1e1e1e;left:876.20px;">Still Working</div>
<div class="g" style="top:404.20px;color:#1e1e1e;left:927.00px;">14</div>
<div class="g" style="top:414.60px;color:#1e1e1e;left:237.20px;">8</div>
<div class="a" style="left:252.50px;top:412.80px;width:13.40px;height:10px;overflow:hidden"><div class="g" style="right:4.5px;top:1.4px;transform-origin:100% 50%">Female</div></div>
<div class="g" style="top:414.60px;color:#1e1e1e;left:269.80px;">Black or African American</div>
<div class="g" style="top:414.60px;color:#1e1e1e;left:350.60px;">Engineering</div>
<div class="g" style="top:414.60px;color:#1e1e1e;left:424.30px;">Developer I</div>
<div class="g" style="top:414.60px;color:#1e1e1e;left:545.40px;">Headquarters</div>
<div class="g" style="top:414.60px;color:#1e1e1e;left:592.60px;">2007-06-27</div>
<div class="g" style="top:414.60px;color:#1e1e1e;left:634.60px;">NULL</div>
<div class="g" style="top:414.60px;color:#1e1e1e;left:716.60px;">Cleveland</div>
<div class="g" style="top:414.60px;color:#1e1e1e;left:759.60px;">Ohio</div>
<div class="g" style="top:414.60px;color:#1e1e1e;left:807.60px;">38</div>
<div class="g" style="top:414.60px;color:#1e1e1e;left:826.80px;">NULL</div>
<div class="g" style="top:414.60px;color:#1e1e1e;left:876.20px;">Still Working</div>
<div class="g" style="top:414.60px;color:#1e1e1e;left:927.00px;">19</div>
<div class="g" style="top:425.00px;color:#1e1e1e;left:237.20px;">9</div>
<div class="a" style="left:252.50px;top:423.20px;width:13.40px;height:10px;overflow:hidden"><div class="g" style="right:11.8px;top:1.4px;transform-origin:100% 50%">Male</div></div>
<div class="g" style="top:425.00px;color:#1e1e1e;left:269.80px;">Asian</div>
<div class="g" style="top:425.00px;color:#1e1e1e;left:350.60px;">Engineering</div>
<div class="g" style="top:425.00px;color:#1e1e1e;left:424.30px;">Business Systems Development Analyst</div>
<div class="g" style="top:425.00px;color:#1e1e1e;left:545.40px;">Headquarters</div>
<div class="g" style="top:425.00px;color:#1e1e1e;left:592.60px;">2001-02-20</div>
<div class="g" style="top:425.00px;color:#1e1e1e;left:634.60px;">2008-12-05 01:21:48 UTC</div>
<div class="g" style="top:425.00px;color:#1e1e1e;left:716.60px;">Cleveland</div>
<div class="g" style="top:425.00px;color:#1e1e1e;left:759.60px;">Ohio</div>
<div class="g" style="top:425.00px;color:#1e1e1e;left:807.60px;">30</div>
<div class="g" style="top:425.00px;color:#1e1e1e;left:826.80px;">2008-12-05</div>
<div class="g" style="top:425.00px;color:#1e1e1e;left:876.20px;">term</div>
<div class="g" style="top:425.00px;color:#1e1e1e;left:927.00px;">7</div>
<div class="g" style="top:435.40px;color:#1e1e1e;left:236.20px;">10</div>
<div class="a" style="left:252.50px;top:433.60px;width:13.40px;height:10px;overflow:hidden"><div class="g" style="right:11.8px;top:1.4px;transform-origin:100% 50%">Male</div></div>
<div class="g" style="top:435.40px;color:#1e1e1e;left:269.80px;">Two or More Races</div>
<div class="g" style="top:435.40px;color:#1e1e1e;left:350.60px;">Engineering</div>
<div class="g" style="top:435.40px;color:#1e1e1e;left:424.30px;">Web Developer I</div>
<div class="g" style="top:435.40px;color:#1e1e1e;left:545.40px;">Headquarters</div>
<div class="g" style="top:435.40px;color:#1e1e1e;left:592.60px;">2005-01-27</div>
<div class="g" style="top:435.40px;color:#1e1e1e;left:634.60px;">NULL</div>
<div class="g" style="top:435.40px;color:#1e1e1e;left:716.60px;">Cleveland</div>
<div class="g" style="top:435.40px;color:#1e1e1e;left:759.60px;">Ohio</div>
<div class="g" style="top:435.40px;color:#1e1e1e;left:807.60px;">46</div>
<div class="g" style="top:435.40px;color:#1e1e1e;left:826.80px;">NULL</div>
<div class="g" style="top:435.40px;color:#1e1e1e;left:876.20px;">Still Working</div>
<div class="g" style="top:435.40px;color:#1e1e1e;left:927.00px;">21</div>
<div class="g" style="top:445.80px;color:#1e1e1e;left:236.20px;">11</div>
<div class="a" style="left:252.50px;top:444.00px;width:13.40px;height:10px;overflow:hidden"><div class="g" style="right:11.8px;top:1.4px;transform-origin:100% 50%">Male</div></div>
<div class="g" style="top:445.80px;color:#1e1e1e;left:269.80px;">Two or More Races</div>
<div class="g" style="top:445.80px;color:#1e1e1e;left:350.60px;">Services</div>
<div class="g" style="top:445.80px;color:#1e1e1e;left:424.30px;">Service Tech II</div>
<div class="g" style="top:445.80px;color:#1e1e1e;left:545.40px;">Headquarters</div>
<div class="g" style="top:445.80px;color:#1e1e1e;left:592.60px;">2004-11-01</div>
<div class="g" style="top:445.80px;color:#1e1e1e;left:634.60px;">NULL</div>
<div class="g" style="top:445.80px;color:#1e1e1e;left:716.60px;">Cleveland</div>
<div class="g" style="top:445.80px;color:#1e1e1e;left:759.60px;">Ohio</div>
<div class="g" style="top:445.80px;color:#1e1e1e;left:807.60px;">51</div>
<div class="g" style="top:445.80px;color:#1e1e1e;left:826.80px;">NULL</div>
<div class="g" style="top:445.80px;color:#1e1e1e;left:876.20px;">Still Working</div>
<div class="g" style="top:445.80px;color:#1e1e1e;left:927.00px;">22</div>
<div class="g" style="top:456.20px;color:#1e1e1e;left:236.20px;">12</div>
<div class="a" style="left:252.50px;top:454.40px;width:13.40px;height:10px;overflow:hidden"><div class="g" style="right:4.5px;top:1.4px;transform-origin:100% 50%">Female</div></div>
<div class="g" style="top:456.20px;color:#1e1e1e;left:269.80px;">White</div>
<div class="g" style="top:456.20px;color:#1e1e1e;left:350.60px;">Engineering</div>
<div class="g" style="top:456.20px;color:#1e1e1e;left:424.30px;">Business Systems Development Analyst</div>
<div class="g" style="top:456.20px;color:#1e1e1e;left:545.40px;">Headquarters</div>
<div class="g" style="top:456.20px;color:#1e1e1e;left:592.60px;">2000-12-05</div>
<div class="g" style="top:456.20px;color:#1e1e1e;left:634.60px;">NULL</div>
<div class="g" style="top:456.20px;color:#1e1e1e;left:716.60px;">Cleveland</div>
<div class="g" style="top:456.20px;color:#1e1e1e;left:759.60px;">Ohio</div>
<div class="g" style="top:456.20px;color:#1e1e1e;left:807.60px;">60</div>
<div class="g" style="top:456.20px;color:#1e1e1e;left:826.80px;">NULL</div>
<div class="g" style="top:456.20px;color:#1e1e1e;left:876.20px;">Still Working</div>
<div class="g" style="top:456.20px;color:#1e1e1e;left:927.00px;">26</div>
<div class="g" style="top:466.60px;color:#1e1e1e;left:236.20px;">13</div>
<div class="a" style="left:252.50px;top:464.80px;width:13.40px;height:10px;overflow:hidden"><div class="g" style="right:11.8px;top:1.4px;transform-origin:100% 50%">Male</div></div>
<div class="g" style="top:466.60px;color:#1e1e1e;left:269.80px;">Two or More Races</div>
<div class="g" style="top:466.60px;color:#1e1e1e;left:350.60px;">Business Development</div>
<div class="g" style="top:466.60px;color:#1e1e1e;left:424.30px;">Business Analyst</div>
<div class="g" style="top:466.60px;color:#1e1e1e;left:545.40px;">Headquarters</div>
<div class="g" style="top:466.60px;color:#1e1e1e;left:592.60px;">2008-09-17</div>
<div class="g" style="top:466.60px;color:#1e1e1e;left:634.60px;">NULL</div>
<div class="g" style="top:466.60px;color:#1e1e1e;left:716.60px;">Cleveland</div>
<div class="g" style="top:466.60px;color:#1e1e1e;left:759.60px;">Ohio</div>
<div class="g" style="top:466.60px;color:#1e1e1e;left:807.60px;">42</div>
<div class="g" style="top:466.60px;color:#1e1e1e;left:826.80px;">NULL</div>
<div class="g" style="top:466.60px;color:#1e1e1e;left:876.20px;">Still Working</div>
<div class="g" style="top:466.60px;color:#1e1e1e;left:927.00px;">18</div>
<div class="g" style="top:477.00px;color:#1e1e1e;left:236.20px;">14</div>
<div class="a" style="left:252.50px;top:475.20px;width:13.40px;height:10px;overflow:hidden"><div class="g" style="right:11.8px;top:1.4px;transform-origin:100% 50%">Male</div></div>
<div class="g" style="top:477.00px;color:#1e1e1e;left:269.80px;">White</div>
<div class="g" style="top:477.00px;color:#1e1e1e;left:350.60px;">Business Development</div>
<div class="g" style="top:477.00px;color:#1e1e1e;left:424.30px;">Research Assistant II</div>
<div class="g" style="top:477.00px;color:#1e1e1e;left:545.40px;">Headquarters</div>
<div class="g" style="top:477.00px;color:#1e1e1e;left:592.60px;">2015-11-25</div>
<div class="g" style="top:477.00px;color:#1e1e1e;left:634.60px;">NULL</div>
<div class="g" style="top:477.00px;color:#1e1e1e;left:716.60px;">Cleveland</div>
<div class="g" style="top:477.00px;color:#1e1e1e;left:759.60px;">Ohio</div>
<div class="g" style="top:477.00px;color:#1e1e1e;left:807.60px;">55</div>
<div class="g" style="top:477.00px;color:#1e1e1e;left:826.80px;">NULL</div>
<div class="g" style="top:477.00px;color:#1e1e1e;left:876.20px;">Still Working</div>
<div class="g" style="top:477.00px;color:#1e1e1e;left:927.00px;">11</div>
</div>
<div class="a" style="left:982.00px;top:329.20px;width:12.00px;height:156.00px;background:#f3f4f6;"></div>
<svg style="left:984.60px;top:332.60px" width="6" height="4" viewBox="0 0 6 4"><path d="M0.4 3.6L3 0.4L5.6 3.6Z" fill="#8b8f94"/></svg>
<div class="a" style="left:985.20px;top:339.40px;width:5.40px;height:9.40px;background:#c2c4c7;"></div>
<svg style="left:984.60px;top:477.60px" width="6" height="4" viewBox="0 0 6 4"><path d="M0.4 0.4L3 3.6L5.6 0.4Z" fill="#8b8f94"/></svg>
<div class="a" style="left:233.00px;top:485.40px;width:748.00px;height:11.00px;background:#f3f4f6;"></div>
<svg style="left:237.60px;top:487.40px" width="4" height="6" viewBox="0 0 4 6"><path d="M3.6 0.4L0.4 3L3.6 5.6Z" fill="#555"/></svg>
<div class="a" style="left:389.60px;top:488.00px;width:582.00px;height:5.00px;background:#c2c4c7;"></div>
<svg style="left:975.00px;top:487.40px" width="4" height="6" viewBox="0 0 4 6"><path d="M0.4 0.4L3.6 3L0.4 5.6Z" fill="#555"/></svg>
<div class="a" style="left:231.50px;top:495.60px;width:764.60px;height:2.90px;background:#dddfe7;"></div>
<!-- query status bar -->
<div class="a" style="left:231.50px;top:498.40px;width:764.60px;height:13.40px;background:#efe58a;border-top:0.7px solid #f8f3c4;"></div>
<svg style="left:233.60px;top:501.60px" width="7.4" height="7.4" viewBox="0 0 7.4 7.4"><circle cx="3.7" cy="3.7" r="3.5" fill="#2e9e3f" stroke="#1d7a2c" stroke-width="0.4"/><path d="M1.9 3.8L3.2 5.1L5.6 2.4" fill="none" stroke="#fff" stroke-width="0.9"/></svg>
<div class="t" style="left:243.60px;top:498.91px;transform:scaleX(0.9007);">Query executed successfully.</div>
<svg style="left:641.60px;top:501.00px" width="7" height="8" viewBox="0 0 7 8"><rect x="0.5" y="3.2" width="6" height="4.4" rx="0.6" fill="#1b1b1b"/><path d="M1.8 3.2V2.2Q1.8 0.6 3.5 0.6Q5.2 0.6 5.2 2.2V3.2" fill="none" stroke="#1b1b1b" stroke-width="0.9"/></svg>
<div class="t" style="left:653.40px;top:498.91px;transform:scaleX(0.8866);">(local) (16.0 RTM)</div>
<div class="t" style="left:721.00px;top:498.91px;transform:scaleX(0.8772);">DESKTOP-B96D9QN\IT (79)</div>
<div class="t" style="left:824.40px;top:498.91px;transform:scaleX(0.8569);">HI_DB</div>
<div class="t" style="left:853.00px;top:498.91px;transform:scaleX(0.8747);">00:00:00</div>
<div class="t" style="left:889.00px;top:498.91px;transform:scaleX(0.8606);">Row: 1, Col: 1</div>
<div class="t" style="left:942.40px;top:498.91px;transform:scaleX(0.8872);">22,214 rows</div>
<div class="a" style="left:717.00px;top:500.40px;width:0.60px;height:9.60px;background:#dccf79;"></div>
<div class="a" style="left:820.00px;top:500.40px;width:0.60px;height:9.60px;background:#dccf79;"></div>
<div class="a" style="left:849.00px;top:500.40px;width:0.60px;height:9.60px;background:#dccf79;"></div>
<div class="a" style="left:885.00px;top:500.40px;width:0.60px;height:9.60px;background:#dccf79;"></div>
<div class="a" style="left:938.40px;top:500.40px;width:0.60px;height:9.60px;background:#dccf79;"></div>
<!-- IDE status bar -->
<div class="a" style="left:0.00px;top:515.80px;width:1000.00px;height:16.20px;background:#475967;"></div>
<svg style="left:4.80px;top:518.80px" width="10.6" height="9.6" viewBox="0 0 10.6 9.6"><path d="M0.6 0.6H10V6.8H4L2 9V6.8H0.6Z" fill="none" stroke="#e8eef3" stroke-width="0.8" stroke-linejoin="round"/></svg>
<div class="t" style="left:22.40px;top:517.71px;color:#f4f7fa;transform:scaleX(0.8237);">Ready</div>
<svg style="left:985.60px;top:519.60px" width="8" height="8.6" viewBox="0 0 8 8.6"><path d="M1 6.2Q1.8 5.4 1.8 3.4Q1.8 0.8 4 0.8Q6.2 0.8 6.2 3.4Q6.2 5.4 7 6.2Z" fill="none" stroke="#e8eef3" stroke-width="0.8" stroke-linejoin="round"/><path d="M3.2 7.4H4.8" stroke="#e8eef3" stroke-width="0.8"/></svg>
<!-- windows taskbar -->
<div class="a" style="left:0.00px;top:532.00px;width:1000.00px;height:31.00px;background:#eef0f4;"></div>
<svg style="left:13.00px;top:539.60px" width="16" height="15" viewBox="0 0 16 15"><circle cx="5.4" cy="5.2" r="3.4" fill="#f5a623"/><path d="M1 5.2L3 6.2" stroke="#f08a1c" stroke-width="1.2"/><path d="M3.4 14.2Q0.6 14.2 0.6 11.6Q0.6 9.2 3.2 9Q4 6.6 7 6.6Q9.8 6.6 10.6 8.8Q14.6 8.6 14.8 11.6Q14.8 14.2 12 14.2Z" fill="#b5d0f4" stroke="#8fb3e6" stroke-width="0.6"/></svg>
<div class="a" style="left:21.00px;top:537.20px;width:8.00px;height:8.00px;background:#d42a2a;border-radius:4px;"></div>
<div class="t" style="left:23.20px;top:535.08px;font-size:6.4px;color:#fff;font-weight:bold;">3</div>
<div class="t" style="left:34.00px;top:535.60px;font-size:8.6px;color:#111;transform:scaleX(0.7494);">14°C</div>
<div class="t" dir="rtl" style="left:33.5px;top:546px;width:29px;font-size:7.4px;color:#5a5f66;font-family:'Liberation Sans','DejaVu Sans',sans-serif;text-align:right">غائم غالبًا</div>
<div class="a" style="left:290.60px;top:540.00px;width:7.30px;height:7.10px;background:#2aa4ee;border-radius:0.8px;"></div>
<div class="a" style="left:298.60px;top:540.00px;width:7.30px;height:7.10px;background:#46b6f4;border-radius:0.8px;"></div>
<div class="a" style="left:290.60px;top:547.70px;width:7.30px;height:7.10px;background:#1588dc;border-radius:0.8px;"></div>
<div class="a" style="left:298.60px;top:547.70px;width:7.30px;height:7.10px;background:#2a9ce8;border-radius:0.8px;"></div>
<div class="a" style="left:315.00px;top:538.00px;width:141.00px;height:20.00px;background:#f9fafc;border-radius:10px;box-shadow:0 0 0 0.5px #e1e5ea;"></div>
<svg style="left:322.00px;top:543.00px" width="9" height="9.4" viewBox="0 0 9 9.4"><circle cx="3.8" cy="3.8" r="3" fill="none" stroke="#222" stroke-width="1.1"/><path d="M6 6.2L8.6 9" stroke="#222" stroke-width="1.2" stroke-linecap="round"/></svg>
<div class="t" style="left:338.00px;top:541.28px;font-size:9px;color:#5f6368;transform:scaleX(0.9468);">Search</div>
<svg style="left:423.00px;top:539.00px" width="31" height="17" viewBox="0 0 31 17"><path d="M1 12Q6 6 15 8Q25 6 30 11Q24 17 15 16Q5 17 1 12Z" fill="#c7daf2" stroke="#9db7dc" stroke-width="0.6"/><path d="M9 11Q9 4.6 14 4.4Q12.6 1.4 15.4 0.8Q19 0.6 19.4 3.6Q21.6 5.6 21 11.4Q15 13.6 9 11Z" fill="#b4673a"/><path d="M13.6 2.4Q14.6 4.6 17.8 4.2L18.4 1.6Z" fill="#e9c9a0"/><path d="M11 11.2H19.6" stroke="#7a3f1e" stroke-width="0.9"/></svg>
<svg style="left:465.00px;top:541.00px" width="13" height="13" viewBox="0 0 13 13"><rect x="4.4" y="0.4" width="8" height="8" rx="0.8" fill="#dcdcdc" stroke="#a9a9a9" stroke-width="0.5"/><path d="M0.4 1.2H4.6V8.4H11.6V12.6H0.4Z" fill="#1b1b1b"/></svg>
<svg style="left:494.00px;top:540.00px" width="15" height="14" viewBox="0 0 15 14"><circle cx="11.2" cy="3.6" r="2.2" fill="#7b83eb"/><circle cx="6.4" cy="2.8" r="2.6" fill="#5059c9"/><path d="M8.8 6H14.4V10.4Q14.4 13 11.6 13Q8.8 13 8.8 10.4Z" fill="#7b83eb"/><rect x="2.2" y="6" width="8.4" height="8" rx="2.4" fill="#5059c9"/><rect x="0.4" y="5" width="7.2" height="7.2" rx="1" fill="#4b53bc"/><path d="M2.2 6.8H5.8M4 6.8V10.8" stroke="#fff" stroke-width="1"/></svg>
<svg style="left:523.00px;top:540.00px" width="16" height="14" viewBox="0 0 16 14"><path d="M0.6 1.2Q0.6 0.4 1.4 0.4H5.4L7 2H14.6Q15.4 2 15.4 2.8V12.4Q15.4 13.4 14.4 13.4H1.6Q0.6 13.4 0.6 12.4Z" fill="#f7c744"/><path d="M0.6 4H15.4V12.4Q15.4 13.4 14.4 13.4H1.6Q0.6 13.4 0.6 12.4Z" fill="#fbd768"/><rect x="2.6" y="8.6" width="10.8" height="4.8" fill="#2c8fd8"/><rect x="5.6" y="10.2" width="4.8" height="1" fill="#bfe0f7"/></svg>
<div class="a" style="left:529.20px;top:557.80px;width:3.00px;height:1.30px;background:#8b9097;border-radius:1px;"></div>
<svg style="left:551.40px;top:539.40px" width="16" height="16" viewBox="0 0 16 16"><circle cx="8" cy="8" r="7.6" fill="#1f8fd6"/><path d="M0.6 9.4Q0.2 2.4 7.6 0.5Q14.6 0.2 15.6 7.2Q12 3 7.4 4.6Q3.6 6.2 0.6 9.4Z" fill="#35c1a6"/><path d="M6.2 8.8Q6 5.4 9.6 5.4Q13 5.6 12.6 9.2H8.2Q8.6 11.6 12.8 11Q10.4 14 7.6 12.2Q5.8 10.8 6.2 8.8Z" fill="#f2f8fc"/><path d="M1 11Q3.6 15.8 9 15.6Q4.6 14 4.8 9.6Q2.4 9.4 1 11Z" fill="#1565b8"/></svg>
<svg style="left:580.00px;top:540.00px" width="15" height="15" viewBox="0 0 15 15"><path d="M4.6 3V1.8Q4.6 0.5 5.9 0.5H9.1Q10.4 0.5 10.4 1.8V3" fill="none" stroke="#1d5fa8" stroke-width="1"/><rect x="0.5" y="3" width="14" height="11.4" rx="1.8" fill="#174a8c"/><rect x="4.2" y="5.6" width="2.9" height="2.9" fill="#f25022"/><rect x="7.8" y="5.6" width="2.9" height="2.9" fill="#7fba00"/><rect x="4.2" y="9.2" width="2.9" height="2.9" fill="#00a4ef"/><rect x="7.8" y="9.2" width="2.9" height="2.9" fill="#ffb900"/></svg>
<div class="a" style="left:605.00px;top:534.40px;width:24.00px;height:26.40px;background:#f8fafc;border-radius:3px;box-shadow:0 0 0 0.5px #dfe4ea;"></div>
<svg style="left:611.00px;top:539.00px" width="12" height="16" viewBox="0 0 12 16"><path d="M0.5 2.8V13.2C0.5 16 11.5 16 11.5 13.2V2.8Z" fill="#1b84de"/><ellipse cx="6" cy="2.8" rx="5.5" ry="2.3" fill="#43a6f2"/><path d="M0.6 6.6Q6 9.2 11.4 6.6M0.6 10.4Q6 13 11.4 10.4" fill="none" stroke="#e8f4fe" stroke-width="1.5"/></svg>
<div class="a" style="left:612.00px;top:557.80px;width:10.00px;height:1.60px;background:#1a6fd0;border-radius:1px;"></div>
<svg style="left:637.00px;top:539.00px" width="16" height="16" viewBox="0 0 16 16"><circle cx="8" cy="8" r="7.8" fill="#e33b2e"/><path d="M8 8L1.25 4.1A7.8 7.8 0 0 0 8 15.8L11.4 9.95Z" fill="#2da94f"/><path d="M8 8L11.4 9.95L8 15.8A7.8 7.8 0 0 0 14.75 4.1H8Z" fill="#fcc934"/><circle cx="8" cy="8" r="3.7" fill="#fff"/><circle cx="8" cy="8" r="2.9" fill="#3f7fe8"/></svg>
<svg style="left:665.80px;top:539.00px" width="16" height="16" viewBox="0 0 16 16"><circle cx="8" cy="8" r="7.8" fill="#e33b2e"/><path d="M8 8L1.25 4.1A7.8 7.8 0 0 0 8 15.8L11.4 9.95Z" fill="#2da94f"/><path d="M8 8L11.4 9.95L8 15.8A7.8 7.8 0 0 0 14.75 4.1H8Z" fill="#fcc934"/><circle cx="8" cy="8" r="3.7" fill="#fff"/><circle cx="8" cy="8" r="2.9" fill="#3f7fe8"/></svg>
<div class="a" style="left:672.40px;top:557.80px;width:3.00px;height:1.30px;background:#8b9097;border-radius:1px;"></div>
<div class="a" style="left:694.40px;top:539.00px;width:16.00px;height:16.00px;background:#0b5cff;border-radius:6.4px;"></div>
<div class="t" style="left:697.40px;top:540.62px;font-size:5px;color:#fff;font-weight:bold;transform:scaleX(0.7814);">zoom</div>
<div class="a" style="left:701.00px;top:557.80px;width:3.00px;height:1.30px;background:#8b9097;border-radius:1px;"></div>
<svg style="left:813.60px;top:545.00px" width="8" height="5" viewBox="0 0 8 5"><path d="M0.6 4.2L3.8 0.8L7 4.2" fill="none" stroke="#222" stroke-width="1" stroke-linecap="round" stroke-linejoin="round"/></svg>
<svg style="left:832.40px;top:543.00px" width="12" height="9" viewBox="0 0 12 9"><path d="M2.6 8Q0.6 8 0.6 6.2Q0.6 4.6 2.4 4.4Q2.8 1.6 5.6 1.6Q7.8 1.6 8.6 3.6Q10.8 3.8 10.8 5.8Q10.8 8 8.8 8Z" fill="none" stroke="#222" stroke-width="0.9"/><path d="M1.2 0.6L10.4 8.6" stroke="#222" stroke-width="0.9"/></svg>
<svg style="left:852.40px;top:542.40px" width="14" height="10" viewBox="0 0 14 10"><rect x="1.4" y="0.4" width="2.6" height="4.6" rx="1.3" fill="#2a7ad4"/><path d="M0.4 3.8Q0.4 6.4 2.7 6.4Q5 6.4 5 3.8M2.7 6.4V8" fill="none" stroke="#2a7ad4" stroke-width="0.8"/><path d="M7 6.2L13.2 3.6L10.8 9.6L9.8 7.2Z" fill="none" stroke="#2a7ad4" stroke-width="0.9" stroke-linejoin="round"/></svg>
<div class="t" style="left:877.00px;top:541.73px;font-size:7.6px;color:#222;transform:scaleX(0.8501);">ENG</div>
<svg style="left:903.00px;top:543.40px" width="11" height="8.6" viewBox="0 0 11 8.6"><path d="M0.6 3.2Q5.5 -1.4 10.4 3.2M2.2 4.8Q5.5 1.8 8.8 4.8M3.8 6.4Q5.5 4.8 7.2 6.4" fill="none" stroke="#222" stroke-width="0.9" stroke-linecap="round"/><circle cx="5.5" cy="7.8" r="0.8" fill="#222"/></svg>
<svg style="left:918.40px;top:543.40px" width="11" height="9" viewBox="0 0 11 9"><path d="M0.6 3.2H2.4L4.8 1V8L2.4 5.8H0.6Z" fill="none" stroke="#222" stroke-width="0.8" stroke-linejoin="round"/><path d="M6.2 3Q7.2 4.5 6.2 6M7.6 1.8Q9.4 4.5 7.6 7.2M9 0.8Q11.4 4.5 9 8.2" fill="none" stroke="#222" stroke-width="0.8" stroke-linecap="round"/></svg>
<svg style="left:934.00px;top:543.20px" width="12" height="9.4" viewBox="0 0 12 9.4"><rect x="0.6" y="3.4" width="9" height="5" rx="1" fill="none" stroke="#222" stroke-width="0.9"/><path d="M10.4 5V7" stroke="#222" stroke-width="1"/><path d="M2 6V2.6H4.4V0.6L7.4 3.4L4.4 6V4.4H3.4V6Z" fill="#222"/></svg>
<div class="t" dir="rtl" style="left:940px;top:537px;width:47.4px;font-size:7.1px;color:#2b2b2b;font-family:'Liberation Sans','DejaVu Sans',sans-serif;text-align:right;direction:rtl;transform:none">٠٨:٤٧ م</div>
<div class="t" style="left:940px;top:546px;width:47.4px;font-size:7.1px;color:#2b2b2b;font-family:'Liberation Sans','DejaVu Sans',sans-serif;text-align:right;transform:none">٢٠٢٦/٠١/١٢</div>
</div></body></html>
